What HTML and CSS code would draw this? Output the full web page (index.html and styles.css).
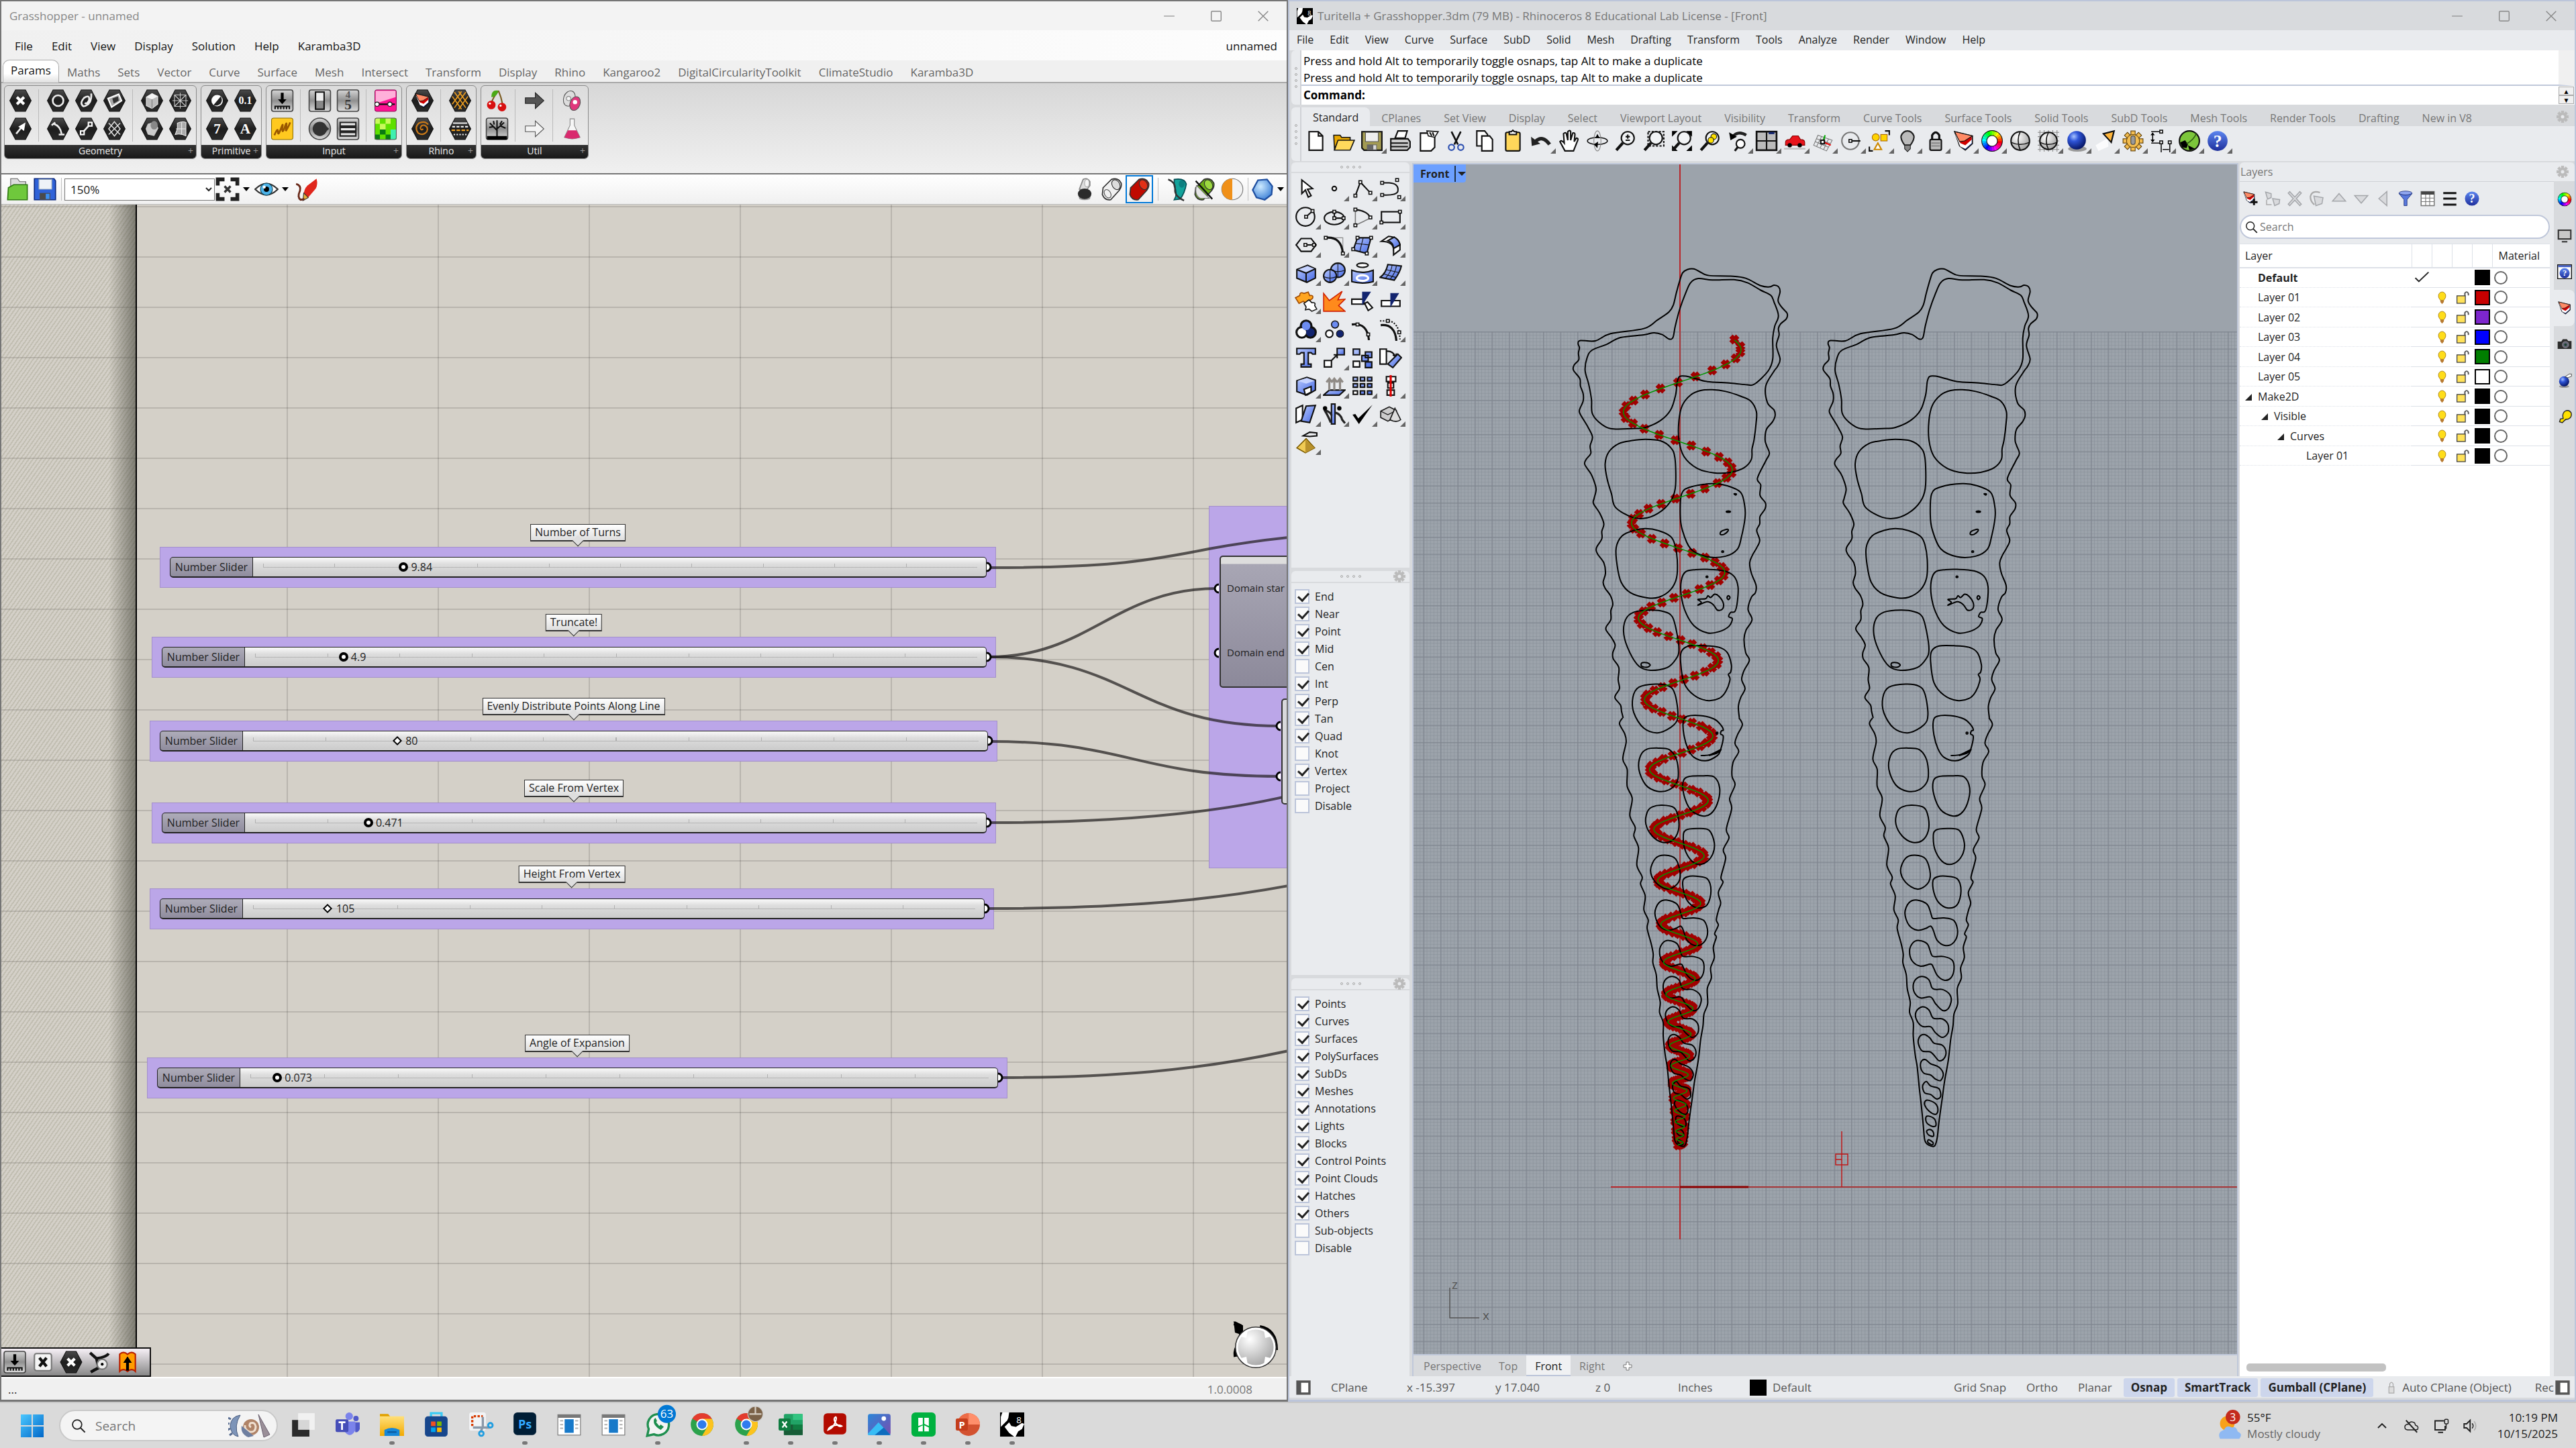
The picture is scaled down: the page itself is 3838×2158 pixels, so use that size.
FILE: index.html
```html
<!DOCTYPE html>
<html lang="en">
<head>
  <meta charset="UTF-8" />
  <meta name="viewport" content="width=device-width, initial-scale=1.0"/>
  <title>Grasshopper + Rhinoceros</title>
  <link rel="stylesheet" href="styles.css">
</head>
<body>
  <!-- Shared gradients for the icons -->
  <svg class="defs" aria-hidden="true">
    <defs>
      <radialGradient id="gBall" cx=".35" cy=".3" r=".75"><stop offset="0" stop-color="#a8c4ff"/><stop offset=".35" stop-color="#2f55d8"/><stop offset="1" stop-color="#04125e"/></radialGradient>
      <radialGradient id="gGrey" cx=".35" cy=".3" r=".8"><stop offset="0" stop-color="#fff"/><stop offset="1" stop-color="#9a9a9a"/></radialGradient>
      <radialGradient id="gSky" cx=".4" cy=".35" r=".7"><stop offset="0" stop-color="#cdeaff"/><stop offset="1" stop-color="#3b7fd6"/></radialGradient>
      <linearGradient id="gDark" x1="0" y1="0" x2="0" y2="1"><stop offset="0" stop-color="#4a4a4a"/><stop offset=".5" stop-color="#1d1d1d"/><stop offset="1" stop-color="#2b2b2b"/></linearGradient>
      <linearGradient id="gMetal" x1="0" y1="0" x2="0" y2="1"><stop offset="0" stop-color="#d5d5d5"/><stop offset=".5" stop-color="#8f8f8f"/><stop offset="1" stop-color="#dcdcdc"/></linearGradient>
      <linearGradient id="gWin" x1="0" y1="0" x2="1" y2="1"><stop offset="0" stop-color="#4cc8ff"/><stop offset="1" stop-color="#0067c8"/></linearGradient>
      <linearGradient id="gBlue" x1="0" y1="0" x2="1" y2="1"><stop offset="0" stop-color="#b9caff"/><stop offset="1" stop-color="#4468e4"/></linearGradient>
      <linearGradient id="gHelp" x1="0" y1="0" x2="0" y2="1"><stop offset="0" stop-color="#5c86f0"/><stop offset="1" stop-color="#1e2f9c"/></linearGradient>
      <linearGradient id="gFold" x1="0" y1="0" x2="0" y2="1"><stop offset="0" stop-color="#ffe07a"/><stop offset="1" stop-color="#f2a900"/></linearGradient>
      <linearGradient id="gPhoto" x1="0" y1="0" x2="1" y2="1"><stop offset="0" stop-color="#2a86d8"/><stop offset="1" stop-color="#7a4cae"/></linearGradient>
    </defs>
  </svg>

  <main class="windows">
    <!-- Grasshopper window -->
    <section class="gh">
      <header class="title-bar">
        <span>Grasshopper - unnamed</span>
        <div class="win-buttons" data-icons="winMin winMax winClose"></div>
      </header>
      <nav class="gh-menu">
        <a href="#">File</a><a href="#">Edit</a><a href="#">View</a><a href="#">Display</a><a href="#">Solution</a><a href="#">Help</a><a href="#">Karamba3D</a>
        <a href="#" class="doc-name">unnamed</a>
      </nav>
      <nav class="gh-tabs">
        <a href="#" class="active">Params</a><a href="#">Maths</a><a href="#">Sets</a><a href="#">Vector</a><a href="#">Curve</a><a href="#">Surface</a><a href="#">Mesh</a><a href="#">Intersect</a><a href="#">Transform</a><a href="#">Display</a><a href="#">Rhino</a><a href="#">Kangaroo2</a><a href="#">DigitalCircularityToolkit</a><a href="#">ClimateStudio</a><a href="#">Karamba3D</a>
      </nav>
      <div class="ribbon">
        <div class="panel">
          <div class="panel-icons">
            <div class="pair" data-icons="hPoint hVector"></div>
            <div class="pair" data-icons="hCircle hArc hCurve hLine hPlane hRect"></div>
            <div class="pair" data-icons="hBox hCyl hMesh hSurf"></div>
          </div>
          <h3>Geometry</h3>
        </div>
        <div class="panel">
          <div class="panel-icons"><div class="pair" data-icons="hBool hInt hNum hText"></div></div>
          <h3>Primitive</h3>
        </div>
        <div class="panel">
          <div class="panel-icons">
            <div class="pair" data-icons="inSlider inScribble"></div>
            <div class="pair" data-icons="inToggle inKnob inScroll inList"></div>
            <div class="pair" data-icons="inPink inGreen"></div>
          </div>
          <h3>Input</h3>
        </div>
        <div class="panel">
          <div class="panel-icons">
            <div class="pair" data-icons="hLayer hSpiral"></div>
            <div class="pair" data-icons="hHatch hLinetype"></div>
          </div>
          <h3>Rhino</h3>
        </div>
        <div class="panel">
          <div class="panel-icons">
            <div class="pair" data-icons="uCherry uTree"></div>
            <div class="pair" data-icons="uArrow uArrowOut"></div>
            <div class="pair" data-icons="uPill uFlask"></div>
          </div>
          <h3>Util</h3>
        </div>
      </div>
      <div class="gh-toolbar">
        <div class="icon-row" data-icons="ghOpen ghSave"></div>
        <i class="sep"></i>
        <select class="zoom-box" aria-label="Zoom"><option>150%</option></select>
        <div class="icon-row carets" data-icons="ghFit ghEye"></div>
        <div class="icon-row" data-icons="ghPen"></div>
        <span class="spring"></span>
        <div class="icon-row" data-icons="pvNone pvWire pvShade"></div>
        <i class="sep wide"></i>
        <div class="icon-row" data-icons="pvTeal pvGreen pvOrange"></div>
        <i class="sep tight"></i>
        <div class="icon-row carets" data-icons="pvBlue"></div>
      </div>
      <div class="gh-canvas" id="canvas">
        <div class="group-box"></div>
        <svg class="wires" id="wires"></svg>
        <div class="component domain"><span>Domain star</span><span>Domain end</span></div>
        <div class="component next"></div>
        <svg class="wires grips"><g>
          <path d="M1814 566a6 6 0 0 0 0 12M1814 662a6 6 0 0 0 0 12M1906 771a6 6 0 0 0 0 12M1906 846a6 6 0 0 0 0 12"/>
        </g></svg>
        <svg class="compass" viewBox="0 0 80 80"><path d="M8 8l10 5v14l6-3-6 12q-10 10-8 22M46 14q24 4 24 34" fill="none" stroke="#000" stroke-width="6"/><path d="M7 5l12 5 2 16-12-4z"/><circle cx="40" cy="44" r="30" fill="url(#gGrey)" stroke="#333" stroke-width="2"/><circle cx="40" cy="44" r="28" fill="none" stroke="#fff" stroke-width="3"/><path d="M18 28l10-10-2 12zM62 28l-10-10 2 12zM18 60l10 10-2-12zM62 60l-10 10 2-12z" fill="#fff"/></svg>
        <div class="widgets" data-icons="inSlider wX hPoint wDraw wBook"></div>
      </div>
      <footer class="gh-status"><span>...</span><span class="version">1.0.0008</span></footer>
    </section>

    <!-- Rhino window -->
    <section class="rhino">
      <header class="title-bar">
        <svg class="logo" viewBox="0 0 32 32" data-icon="rhinoApp"></svg>
        <span>Turitella + Grasshopper.3dm (79 MB) - Rhinoceros 8 Educational Lab License - [Front]</span>
        <div class="win-buttons" data-icons="winMin winMax winClose"></div>
      </header>
      <nav class="rh-menu">
        <a href="#">File</a><a href="#">Edit</a><a href="#">View</a><a href="#">Curve</a><a href="#">Surface</a><a href="#">SubD</a><a href="#">Solid</a><a href="#">Mesh</a><a href="#">Drafting</a><a href="#">Transform</a><a href="#">Tools</a><a href="#">Analyze</a><a href="#">Render</a><a href="#">Window</a><a href="#">Help</a>
      </nav>
      <div class="command">
        <div class="grip"><i></i><i></i><i></i><i></i></div>
        <div class="command-main">
          <div class="history">
            <p>Press and hold Alt to temporarily toggle osnaps, tap Alt to make a duplicate</p>
            <p>Press and hold Alt to temporarily toggle osnaps, tap Alt to make a duplicate</p>
          </div>
          <div class="prompt">
            <label for="cmd">Command:</label><input id="cmd" type="text">
            <div class="spin"><button aria-label="Up">▲</button><button aria-label="Down">▼</button></div>
          </div>
        </div>
      </div>
      <div class="toolbars">
        <div class="grip"><i></i><i></i><i></i><i></i></div>
        <div class="toolbars-main">
          <nav class="rh-tabs">
            <a href="#" class="active">Standard</a><a href="#">CPlanes</a><a href="#">Set View</a><a href="#">Display</a><a href="#">Select</a><a href="#">Viewport Layout</a><a href="#">Visibility</a><a href="#">Transform</a><a href="#">Curve Tools</a><a href="#">Surface Tools</a><a href="#">Solid Tools</a><a href="#">SubD Tools</a><a href="#">Mesh Tools</a><a href="#">Render Tools</a><a href="#">Drafting</a><a href="#">New in V8</a>
            <svg class="cog" viewBox="0 0 32 32" data-icon="cog"></svg>
          </nav>
          <div class="rh-tools" data-icons="new open save* print props cut copy paste undo* pan rotate zoomDyn zoomWin zoomExt zoomSel undoView* views* car* cplane* center* select* bulb* lock* layers* wheel* sphere sphereGrid* ball* spot* gear* dims* hopper* help*"></div>
        </div>
      </div>

      <div class="workspace">
        <aside class="palette">
          <div class="box tools-box">
            <div class="box-head"><i></i><i></i><i></i><i></i></div>
            <div class="tool-grid" data-icons="pArrow pPoint* pPoly* pCurve* pCircle* pEllipse* pArc* pRect* pHex* pFillet* pPatch* pSweep* pBox* pSpheres* pPipe* pSurf* pPuzzle* pExplode pTrim pSplit pUnion* pCircles pEdit pOffset* pText pMove* pCopy pRotate pBoolean* pExtrude* pArray* pAlign* pShear* pPull* pCheck* pSolids* pDrag*"></div>
          </div>
          <div class="box osnap-box">
            <div class="box-head"><i></i><i></i><i></i><i></i><svg class="cog" viewBox="0 0 32 32" data-icon="cog"></svg></div>
            <div class="checks" id="osnaps"></div>
          </div>
          <div class="box filter-box">
            <div class="box-head"><i></i><i></i><i></i><i></i><svg class="cog" viewBox="0 0 32 32" data-icon="cog"></svg></div>
            <div class="checks" id="filters"></div>
          </div>
        </aside>

        <div class="view">
          <div class="viewport">
            <svg class="scene" id="scene"></svg>
            <button class="view-name">Front<i></i></button>
          </div>
          <nav class="view-tabs"><a href="#">Perspective</a><a href="#">Top</a><a href="#" class="active">Front</a><a href="#">Right</a><button class="add" aria-label="Add viewport"><svg viewBox="0 0 32 32" data-icon="addView"></svg></button></nav>
        </div>

        <aside class="layers-panel">
          <div class="layers-head"><h2>Layers</h2><svg class="cog" viewBox="0 0 32 32" data-icon="cog"></svg></div>
          <div class="layers-body">
            <div class="layers-main">
              <div class="layer-tools" data-icons="lNew lSub lDel lDup lUp lDown lLeft lFilter lTable lMenu help"></div>
              <div class="search"><svg viewBox="0 0 32 32" data-icon="mag"></svg><input type="search" aria-label="Search layers" placeholder="Search"></div>
              <div class="layer-list">
                <table>
                  <thead><tr><th class="name">Layer</th><th></th><th></th><th></th><th></th><th class="mat">Material</th></tr></thead>
                  <tbody id="layers"></tbody>
                </table>
                <div class="hscroll"></div>
              </div>
            </div>
            <div class="side-tabs" data-icons="wheel monitor helpBox layers camera ballHand bulbY"></div>
          </div>
        </aside>
      </div>

      <footer class="rh-status">
        <svg class="pane" viewBox="0 0 32 32" data-icon="pane"></svg>
        <span class="s-cplane">CPlane</span><span class="s-x">x -15.397</span><span class="s-y">y 17.040</span><span class="s-z">z 0</span><span class="s-unit">Inches</span>
        <span class="s-layer"><i></i>Default</span>
        <span class="spring"></span>
        <button>Grid Snap</button><button>Ortho</button><button>Planar</button><button class="on">Osnap</button><button class="on">SmartTrack</button><button class="on">Gumball (CPlane)</button>
        <button class="auto"><svg viewBox="0 0 32 32" data-icon="lockGrey"></svg>Auto CPlane (Object)</button><button class="rec">Rec</button>
        <svg class="pane" viewBox="0 0 32 32" data-icon="pane"></svg>
      </footer>
    </section>
  </main>

  <!-- Windows taskbar -->
  <footer class="taskbar">
    <button class="start" aria-label="Start"><svg viewBox="0 0 32 32" data-icon="win"></svg></button>
    <label class="task-search"><svg viewBox="0 0 32 32" data-icon="mag"></svg><input type="text" placeholder="Search"><svg class="shells" viewBox="0 0 64 36" data-icon="shells"></svg></label>
    <div class="apps" data-icons="tTask tTeams tFiles. tStore tSnip tPs. tDoc tDoc tWhats. tChrome tChrome2. tExcel. tAcro. tPhoto. tGreen. tPpt. rhinoApp."></div>
    <span class="spring"></span>
    <button class="weather"><svg viewBox="0 0 32 40" data-icon="weather"></svg><span>55°F<small>Mostly cloudy</small></span></button>
    <div class="tray" data-icons="trayUp trayCloud trayNet traySound"></div>
    <div class="clock"><span>10:19 PM</span><span>10/15/2025</span></div>
  </footer>

  <script src="script.js"></script>
</body>
</html>
```

FILE: styles.css
```css
* {
  box-sizing: border-box;
}
body {
  margin: 0;
  height: 100vh;
  display: flex;
  flex-direction: column;
  overflow: hidden;
  font-family: "Segoe UI", "Open Sans", "Noto Sans", sans-serif;
  font-size: 16px;
  line-height: 24px;
  color: #222;
  background: #dadada;
}
a {
  color: inherit;
  text-decoration: none;
  white-space: nowrap;
}
button, input, select {
  font: inherit;
  color: inherit;
  background: none;
  border: 0;
  padding: 0;
  margin: 0;
}
h2, h3, p {
  margin: 0;
  font-weight: normal;
}
svg {
  display: block;
}
.defs {
  position: absolute;
  width: 0;
  height: 0;
}
.spring {
  flex: 1;
}
.windows {
  flex: 1;
  display: flex;
  min-height: 0;
}
.gh, .rhino {
  flex: 1;
  min-width: 0;
  display: flex;
  flex-direction: column;
}

/* Icon drawing helpers */
.ln { fill: none; stroke: #111; stroke-width: 2; }
.wh { fill: #fff; stroke: #111; stroke-width: 2; }
.bl { fill: url(#gBlue); stroke: #111; stroke-width: 2; }
.nv { fill: #12246f; stroke: #12246f; }
.gy { fill: #d9dadd; stroke: #a4a6aa; stroke-width: 2; }
.hx { fill: url(#gDark); stroke: #111; }
.hw { fill: none; stroke: #eee; stroke-width: 2.5; }
.mt { fill: url(#gMetal); stroke: #444; stroke-width: 1.5; }

/* Title bars */
.title-bar {
  display: flex;
  align-items: center;
  height: 43px;
  padding-left: 12px;
  font-size: 17px;
  color: #888;
  background: #f3f3f3;
}
.win-buttons {
  display: flex;
  margin-left: auto;
}
.win-buttons button {
  width: 70px;
  display: flex;
  justify-content: center;
}
.win-buttons svg {
  width: 18px;
  height: 18px;
}

/* Grasshopper */
.gh {
  border: 2px solid #757575;
  border-bottom-width: 3px;
  background: #f0f0f0;
  font-size: 17px;
}
.gh-menu {
  display: flex;
  align-items: center;
  gap: 28px;
  height: 45px;
  padding: 2px 14px 0 20px;
  color: #111;
  background: linear-gradient(to right, #f0f0f0, #fdfdfd);
}
.doc-name {
  margin-left: auto;
}
.gh-tabs {
  display: flex;
  align-items: center;
  height: 34px;
  padding-left: 2px;
  color: #666;
  border-bottom: 2px solid #aaa;
}
.gh-tabs a {
  padding: 4px 14px 0 12px;
}
.gh-tabs .active {
  height: 34px;
  padding: 3px 11px 0 11px;
  color: #111;
  background: linear-gradient(#fff 60%, #e0e0e0);
  border: 1px solid #aaa;
  border-bottom: 0;
  border-radius: 10px 10px 0 0;
}
.ribbon {
  display: flex;
  gap: 6px;
  height: 134px;
  padding: 3px 4px 0;
  align-items: flex-start;
  background: linear-gradient(#d7d7d7, #f0f0f0);
}
.panel {
  border: 1px solid #8a8a8a;
  border-radius: 6px;
  overflow: hidden;
  background: linear-gradient(#dcdcdc, #efefef);
}
.panel-icons {
  display: flex;
  gap: 21px;
  height: 88px;
  padding: 5px 6px 0;
}
.pair {
  display: grid;
  grid-template-rows: 34px 34px;
  grid-auto-flow: column;
  grid-auto-columns: 35px;
  gap: 8px 7px;
  position: relative;
}
.pair + .pair::before {
  content: "";
  position: absolute;
  left: -12px;
  top: 0;
  height: 78px;
  border-left: 1px solid #bbb;
}
.pair button, .pair svg {
  width: 35px;
  height: 34px;
}
.panel h3 {
  height: 20px;
  font-size: 14px;
  line-height: 18px;
  text-align: center;
  color: #eee;
  background: linear-gradient(#333, #181818);
  position: relative;
}
.panel h3::after {
  content: "+";
  position: absolute;
  right: 4px;
  color: #999;
}
.gh-toolbar {
  display: flex;
  align-items: center;
  height: 46px;
  padding: 0 2px 0 3px;
  border-top: 2px solid #777;
  background: linear-gradient(#fff, #f0f0f0);
}
.icon-row {
  display: flex;
}
.icon-row button {
  width: 41px;
  height: 42px;
  display: flex;
  align-items: center;
  justify-content: center;
  position: relative;
}
.icon-row svg {
  width: 36px;
  height: 36px;
}
.icon-row .pvShade {
  border: 2px solid #0078d7;
}
.carets button {
  width: 58px;
  padding-right: 20px;
}
.carets .pvBlue {
  width: 52px;
  padding-right: 16px;
}
.carets.icon-row button::after {
  content: "";
  position: absolute;
  right: 6px;
  border: 5px solid transparent;
  border-top: 6px solid #000;
  border-bottom: 0;
}
.carets.icon-row .pvBlue::after {
  right: 2px;
}
.sep {
  width: 1px;
  height: 34px;
  margin: 0 4px 0 4px;
  background: #c0c0c0;
}
.sep.wide {
  margin: 0 7px;
}
.sep.tight {
  margin: 0 3px;
}
.zoom-box {
  width: 224px;
  height: 33px;
  padding-left: 4px;
  border: 1px solid #777;
  background: #fff;
}

/* Grasshopper canvas */
.gh-canvas {
  flex: 1;
  position: relative;
  overflow: hidden;
  min-height: 0;
  border-top: 1px solid #bbb;
  background:
    linear-gradient(#000, #000) 200px 0 / 2px 100% no-repeat,
    linear-gradient(to right, transparent, rgba(70, 70, 60, .6)) 160px 0 / 40px 100% no-repeat,
    repeating-linear-gradient(125deg, rgba(120, 120, 90, .2) 0 2px, transparent 2px 5px) 0 0 / 200px 100% no-repeat,
    repeating-linear-gradient(to right, rgba(0, 0, 0, .13) 0 2px, transparent 2px 225px) 200px 0 no-repeat,
    repeating-linear-gradient(rgba(0, 0, 0, .13) 0 2px, transparent 2px 75px) 0 2px,
    #d4d0c8;
}
.node, .group-box {
  position: absolute;
  background: #bba6e8;
  border: 1px solid #a38fcb;
}
.node {
  display: flex;
  height: 61px;
  padding: 14px 13px 14px 14px;
  line-height: 28px;
  font-size: 16px;
}
.node-name {
  flex: 0 0 124px;
  border: 1px solid #222;
  border-bottom-width: 2px;
  border-radius: 5px 0 0 5px;
  text-align: center;
  background: linear-gradient(#aeacb9, #8f8c9d);
}
.track {
  flex: 1;
  padding: 0 13px 0 15px;
  border: 1px solid #222;
  border-bottom-width: 2px;
  border-left: 0;
  border-radius: 0 5px 5px 0;
  background: linear-gradient(#fafafa, #ddd 35%, #cbcbcb);
}
.rail {
  position: relative;
  height: 28px;
  background:
    linear-gradient(#b5b5b5, #b5b5b5) 0 14px / 100% 1px no-repeat,
    repeating-linear-gradient(to right, #b0b0b0 0 1px, transparent 1px 10%) 0 9px / 100% 6px no-repeat;
}
.rail input {
  appearance: none;
  position: absolute;
  left: -7px;
  top: 0;
  width: calc(100% + 14px);
  height: 28px;
}
.rail input::-webkit-slider-thumb {
  appearance: none;
  width: 14px;
  height: 14px;
  border: 4px solid #000;
  border-radius: 50%;
  background: #fff;
}
.rail input.whole::-webkit-slider-thumb {
  width: 10px;
  height: 10px;
  border-width: 2px;
  border-radius: 0;
  transform: rotate(45deg);
}
.rail output {
  position: absolute;
  margin-left: 11px;
}
.tag {
  position: absolute;
  left: 50%;
  bottom: calc(100% + 9px);
  transform: translateX(-50%);
  height: 26px;
  padding: 0 6px;
  line-height: 22px;
  white-space: nowrap;
  border: 2px solid #333;
  border-width: 1px 1px 2px;
  background: linear-gradient(#fff, #dedede);
}
.tag::after {
  content: "";
  position: absolute;
  left: 50%;
  top: 18px;
  width: 11px;
  height: 11px;
  margin-left: -6px;
  border: solid #333;
  border-width: 0 1px 1px 0;
  background: #dedede;
  transform: rotate(45deg);
}
.group-box {
  left: 1799px;
  top: 449px;
  right: -2px;
  height: 540px;
}
.wires {
  position: absolute;
  inset: 0;
  width: 100%;
  height: 100%;
  pointer-events: none;
}
.wires path {
  fill: none;
  stroke: #1e1b1b;
  stroke-opacity: .7;
  stroke-width: 4;
}
.wires .grip-out, .grips path {
  fill: #fff;
  stroke: #000;
  stroke-opacity: 1;
  stroke-width: 3;
}
.component {
  position: absolute;
  right: -20px;
  border: 2px solid #333;
  border-radius: 5px;
  font-size: 15px;
  background: linear-gradient(#ddd 0 10px, #a8a6b4 11px, #8c899a);
}
.component.domain {
  left: 1815px;
  top: 523px;
  height: 197px;
  padding: 34px 0 0 9px;
}
.component.domain span {
  display: block;
  height: 96px;
  white-space: nowrap;
}
.component.next {
  left: 1907px;
  top: 736px;
  height: 158px;
  background: #d8d8dc;
}
.compass {
  position: absolute;
  right: 6px;
  bottom: 8px;
  width: 80px;
  height: 80px;
}
.widgets {
  position: absolute;
  left: 0;
  bottom: 0;
  display: flex;
  gap: 8px;
  padding: 3px 16px 3px 3px;
  border: 2px solid #111;
  border-left: 0;
  background: linear-gradient(#f6f0f6, #888);
}
.widgets svg {
  width: 34px;
  height: 34px;
}
.gh-status {
  display: flex;
  justify-content: space-between;
  align-items: center;
  height: 34px;
  padding: 2px 51px 0 10px;
  border-top: 2px solid #fff;
}
.version {
  color: #777;
}

/* Rhino */
.rhino {
  border: 2px solid #bcc5da;
  border-bottom-width: 3px;
  background: #d8dadd;
  padding-bottom: 3px;
}
.rhino .title-bar {
  padding-left: 11px;
  color: #777;
  background: #d8dadd;
}
.logo {
  width: 24px;
  height: 24px;
  margin-right: 7px;
}
.rh-menu {
  display: flex;
  align-items: center;
  gap: 24px;
  height: 30px;
  padding: 0 0 2px 11px;
  background: #e9ebee;
}
.command, .toolbars {
  display: flex;
  padding-left: 3px;
}
.grip {
  flex: 0 0 15px;
  display: flex;
  flex-direction: column;
  align-items: center;
  justify-content: center;
  gap: 5px;
  background: #e9ebee;
  border-right: 2px solid #d0d2d6;
  border-radius: 6px 0 0 6px;
}
.grip i, .box-head i {
  width: 4px;
  height: 4px;
  border: 1px solid #aaa;
  border-radius: 50%;
}
.command-main {
  flex: 1;
  min-width: 0;
  background: #fff;
  color: #000;
  font-size: 17px;
}
.history {
  height: 53px;
  padding: 3px 0 0 3px;
  border-right: 24px solid #f0f0f0;
  border-bottom: 2px solid #c0c8da;
}
.history p {
  line-height: 25px;
}
.prompt {
  display: flex;
  align-items: center;
  height: 28px;
  padding-left: 3px;
  font-weight: bold;
}
.prompt input {
  flex: 1;
}
.spin {
  width: 24px;
}
.spin button {
  display: block;
  width: 23px;
  height: 13px;
  font-size: 10px;
  line-height: 10px;
  border: 1px solid #aaa;
  background: #f0f0f0;
}
.toolbars {
  padding-top: 4px;
}
.toolbars-main {
  flex: 1;
  min-width: 0;
}
.rh-tabs {
  display: flex;
  align-items: center;
  height: 28px;
  color: #777;
}
.rh-tabs a {
  padding: 3px 17px 0;
}
.rh-tabs .active {
  height: 28px;
  color: #222;
  background: #e9ebee;
  border-radius: 0 8px 0 0;
}
.cog {
  width: 20px;
  height: 20px;
  margin-left: auto;
}
.rh-tabs .cog {
  margin-right: 8px;
}
.rh-tools {
  display: flex;
  height: 52px;
  padding: 0 0 0 1px;
  background: #e9ebee;
}
.rh-tools button, .tool-grid button {
  width: 42px;
  height: 42px;
  padding: 1px 0 0 3px;
  position: relative;
}
.rh-tools svg, .tool-grid svg {
  width: 34px;
  height: 34px;
}
.flyout::after {
  content: "";
  position: absolute;
  right: 0;
  bottom: 1px;
  border: 4px solid transparent;
  border-right-color: #666;
  border-bottom-color: #666;
}

.workspace {
  flex: 1;
  min-height: 0;
  display: flex;
  margin-top: 2px;
}
.palette {
  flex: 0 0 183px;
  display: flex;
  flex-direction: column;
  gap: 5px;
  padding: 0 4px 0 3px;
}
.box {
  background: #e9ebee;
  border-radius: 6px 6px 0 0;
}
.tools-box {
  flex: 0 0 604px;
}
.osnap-box {
  flex: 0 0 602px;
}
.filter-box {
  flex: 1;
}
.box-head {
  display: flex;
  align-items: center;
  gap: 5px;
  height: 16px;
  padding-left: 73px;
  border-bottom: 2px solid #d8dadd;
}
.osnap-box .box-head, .filter-box .box-head {
  height: 18px;
}
.box-head .cog {
  margin-right: 5px;
}
.tool-grid {
  display: grid;
  grid-template-columns: repeat(4, 42px);
  padding: 1px 0 0 2px;
}
.checks {
  padding: 7px 0 0 5px;
}
.checks label {
  display: flex;
  align-items: center;
  gap: 8px;
  height: 26px;
}
.checks input {
  appearance: none;
  width: 22px;
  height: 22px;
  border: 2px solid #bcc5da;
  background: #fafafa;
}
.checks input:checked::before {
  content: "";
  display: block;
  width: 13px;
  height: 7px;
  margin: 3px 0 0 3px;
  border: solid #222;
  border-width: 0 0 3px 3px;
  transform: rotate(-48deg);
}

.view {
  flex: 1;
  min-width: 0;
  display: flex;
  flex-direction: column;
  margin-top: 1px;
  border: solid #c0c8da;
  border-width: 2px 2px 0;
}
.viewport {
  flex: 1;
  min-height: 0;
  position: relative;
  overflow: hidden;
  background: #9ca3ab;
}
.scene {
  position: absolute;
  width: 100%;
  height: 100%;
}
.shell {
  fill: none;
  stroke: #000;
  stroke-width: 2;
  vector-effect: non-scaling-stroke;
}
.view-name {
  position: absolute;
  left: 0;
  top: 0;
  display: flex;
  align-items: center;
  height: 27px;
  padding-left: 10px;
  font-weight: bold;
  background: #6ca0ff;
  border-radius: 0 0 4px 0;
}
.view-name i {
  height: 24px;
  margin-left: 8px;
  border-left: 2px solid #234;
  width: 17px;
}
.view-name i::after {
  content: "";
  display: block;
  margin: 9px 0 0 3px;
  width: 0;
  border: 6px solid transparent;
  border-top-color: #222;
}
.view-tabs {
  display: flex;
  height: 33px;
  padding-left: 2px;
  border-top: 2px solid #c0c8da;
  color: #777;
  background: #d8dadd;
}
.view-tabs a {
  padding: 4px 13px 0;
}
.view-tabs .active {
  color: #222;
  background: #f0f1f3;
  border-bottom: 2px solid #bcc5da;
}
.view-tabs .add {
  padding: 0 14px 0 13px;
}
.add svg {
  width: 16px;
  height: 16px;
}

/* Layers panel */
.layers-panel {
  flex: 0 0 501px;
  display: flex;
  flex-direction: column;
  padding-left: 2px;
}
.layers-head {
  display: flex;
  align-items: center;
  height: 28px;
  padding: 0 8px 0 1px;
  background: #e9ebee;
  border-radius: 6px 6px 0 0;
  color: #777;
}
.layers-head h2 {
  font-size: 16px;
}
.layers-body {
  flex: 1;
  min-height: 0;
  display: flex;
}
.layers-main {
  flex: 1;
  display: flex;
  flex-direction: column;
  padding-right: 6px;
  background: #e9ebee;
  border-top: 1px solid #d0d2d6;
}
.layer-tools {
  display: flex;
  padding: 11px 0 0 1px;
}
.layer-tools button {
  width: 33px;
  height: 28px;
  padding-left: 3px;
}
.layer-tools svg {
  width: 24px;
  height: 24px;
}
.search {
  display: flex;
  align-items: center;
  height: 36px;
  margin: 10px 0 7px;
  padding-left: 6px;
  border: 2px solid #c0c8da;
  border-radius: 18px;
  background: #fff;
}
.search svg {
  width: 19px;
  height: 19px;
}
.search input {
  flex: 1;
  padding-left: 3px;
}
input::placeholder {
  color: #777;
}
.layer-list {
  flex: 1;
  display: flex;
  flex-direction: column;
  justify-content: space-between;
  background: #fff;
}
table {
  width: 100%;
  border-collapse: collapse;
  table-layout: fixed;
}
th {
  width: 30px;
  height: 35px;
  padding: 0;
  text-align: left;
  font-weight: normal;
  border: solid #dde1e8;
  border-width: 1px 0 2px 1px;
}
th.name {
  width: 256px;
  padding-left: 8px;
  border-left: 0;
}
th.mat {
  width: auto;
  padding-left: 9px;
}
td {
  height: 29px;
  padding: 0;
  line-height: 22px;
  border-bottom: 1px solid #dde1e8;
}
tr:nth-child(odd) td {
  height: 30px;
}
td:first-child {
  padding-left: 27px;
  border-bottom-style: dotted;
}
td.d0:first-child { padding-left: 8px; }
td.d1:first-child { padding-left: 32px; }
td.d2:first-child { padding-left: 56px; }
td.d3:first-child { padding-left: 99px; }
.fold {
  display: inline-block;
  margin-right: 9px;
  border: 5px solid transparent;
  border-right-color: #222;
  border-bottom-color: #222;
}
td svg {
  width: 21px;
  height: 21px;
  margin-left: 5px;
}
.swatch {
  width: 23px;
  height: 23px;
  margin-left: 4px;
  border: 2px solid #000;
}
.ring {
  width: 20px;
  height: 20px;
  margin-left: 3px;
  border: 2px solid #666;
  border-radius: 50%;
}
.current td {
  font-weight: bold;
}
.hscroll {
  width: 208px;
  height: 12px;
  margin: 0 0 7px 10px;
  border-radius: 5px;
  background: #c2c2c2;
}
.side-tabs {
  flex: 0 0 31px;
}
.side-tabs button {
  display: flex;
  align-items: center;
  justify-content: center;
  width: 31px;
  height: 54px;
}
.side-tabs svg {
  width: 22px;
  height: 22px;
}
.side-tabs .layers {
  background: #e9ebee;
  border-radius: 0 8px 8px 0;
}

.rh-status {
  display: flex;
  align-items: center;
  height: 32px;
  padding: 2px 7px 0 10px;
  font-size: 17px;
  white-space: nowrap;
  color: #555;
  background: #e9ebee;
}
.pane {
  width: 22px;
  height: 22px;
}
.s-cplane { width: 143px; padding-left: 30px; }
.s-x { width: 132px; }
.s-y { width: 149px; }
.s-z { width: 123px; }
.s-unit { width: 107px; }
.s-layer { display: flex; align-items: center; }
.s-layer i {
  width: 25px;
  height: 24px;
  margin-right: 9px;
  background: #000;
}
.rh-status button {
  height: 28px;
  padding: 0 13px;
  margin: 0 2px;
}
.rh-status .on {
  padding: 0 11px;
  font-weight: bold;
  color: #222;
  background: #cdd6ec;
  border-radius: 3px;
}
.rh-status .auto {
  display: flex;
  align-items: center;
}
.auto svg {
  width: 20px;
  height: 22px;
  margin-right: 6px;
}
.rh-status .rec {
  padding: 0;
  margin: 0 2px 0 20px;
}

/* Taskbar */
.taskbar {
  flex: 0 0 69px;
  display: flex;
  align-items: center;
  padding-left: 31px;
  border-top: 2px solid #c6c6c6;
  font-size: 17px;
  background: #dadada;
}
.start svg {
  width: 34px;
  height: 34px;
}
.task-search {
  display: flex;
  align-items: center;
  width: 326px;
  height: 47px;
  margin: 0 10px 0 23px;
  padding: 0 8px 0 16px;
  border: 2px solid #c9c9c9;
  border-radius: 24px;
  background: #f4f4f4;
  font-size: 19px;
}
.task-search svg {
  width: 22px;
  height: 22px;
}
.task-search input {
  flex: 1;
  min-width: 0;
  padding-left: 14px;
}
.task-search .shells {
  width: 64px;
  height: 36px;
}
.apps {
  display: flex;
}
.apps button {
  width: 66px;
  height: 67px;
  padding: 0 0 4px 10px;
  position: relative;
}
.apps svg {
  width: 36px;
  height: 36px;
  overflow: visible;
}
.running::after {
  content: "";
  position: absolute;
  left: 24px;
  bottom: 5px;
  width: 8px;
  height: 5px;
  border-radius: 3px;
  background: #777;
}
.weather {
  display: flex;
  align-items: center;
  gap: 6px;
  text-align: left;
}
.weather > svg {
  width: 40px;
  height: 48px;
}
.weather small {
  display: block;
  font-size: 17px;
  color: #666;
}
.tray {
  display: flex;
  gap: 20px;
  margin-left: 80px;
}
.tray svg {
  width: 24px;
  height: 24px;
}
.clock {
  display: flex;
  flex-direction: column;
  align-items: flex-end;
  width: 118px;
  margin-right: 27px;
}
```

FILE: script.js
```js
// Icon drawings, all on a 32 x 32 box
const hex = inner => '<path class="hx" d="M9 1h14l8 15-8 15H9L1 16z"/>' + inner;
const tile = inner => '<rect class="mt" x="1" y="1" width="30" height="30" rx="3"/>' + inner;
const dot = (...pts) => pts.map(([x, y]) => `<rect x="${x - 2}" y="${y - 2}" width="4" height="4" fill="#fff" stroke="#111" stroke-width="1.5"/>`).join('');
const txt = (t, size, fill, x = 16, y = 24) => `<text x="${x}" y="${y}" text-anchor="middle" font-family="Liberation Serif, serif" font-weight="bold" font-size="${size}" fill="${fill}">${t}</text>`;

function wheelArcs(cx, cy, r, w) {
  let out = `<circle cx="${cx}" cy="${cy}" r="${r}" fill="#fff" stroke="#111" stroke-width="${w + 2}"/>`;
  for (let i = 0; i < 24; i++) {
    const a = i * 15 * Math.PI / 180, b = (i * 15 + 16) * Math.PI / 180;
    out += `<path fill="none" stroke="hsl(${(360 - i * 15) % 360} 100% 50%)" stroke-width="${w}" d="M${cx + r * Math.cos(a)} ${cy + r * Math.sin(a)}A${r} ${r} 0 0 1 ${cx + r * Math.cos(b)} ${cy + r * Math.sin(b)}"/>`;
  }
  return out;
}

const cogPath = (fill, stroke) => {
  let teeth = '';
  for (let i = 0; i < 8; i++) teeth += `<rect x="13" y="2" width="6" height="8" transform="rotate(${i * 45} 16 16)" fill="${fill}" stroke="${stroke}"/>`;
  return teeth + `<circle cx="16" cy="16" r="9" fill="${fill}" stroke="${stroke}"/>`;
};
const layerWedge = '<path d="M3 3l7 20 8 6 10-9V9z" fill="#1c3aa0" stroke="#111" stroke-width="1.5"/><path d="M4 7l7 17 7 3 9-8V9z" fill="#fff"/><path d="M4 4l7 15 7 3 9-8V9z" fill="#d00000"/><path d="M3 3l25 6-11 7-7 1z" fill="#ff8a65" stroke="#111"/>';
const roll = (a, b) => `<path d="M4 14L15 3q9-3 13 5 1 5-3 10L14 30q-8 1-11-7z" fill="${a}" stroke="#333" stroke-width="1.5"/><ellipse cx="21" cy="10" rx="5" ry="7" transform="rotate(-30 21 10)" fill="${b}" stroke="#333"/>`;
const chrome = '<circle cx="16" cy="16" r="15" fill="#2ba24c"/><path d="M3 8.500A15 15 0 0 1 29 8.500L16 16z" fill="#e33b2e"/><path d="M3 8.500l8 13 5-6z" fill="#2ba24c"/><path d="M29 8.500A15 15 0 0 1 16 31l7-12-7-10.500z" fill="#fcc31e"/><circle cx="16" cy="16" r="7.500" fill="#fff"/><circle cx="16" cy="16" r="5.800" fill="#2f7bee"/>';
const magnify = inner => inner + '<circle cx="19" cy="12" r="9" fill="#f4f6f8" fill-opacity=".7" stroke="#111" stroke-width="2"/><path d="M12 19L3 29" stroke="#111" stroke-width="4"/>';
const docIcon = '<rect x="1" y="3" width="30" height="27" fill="#fff" stroke="#777"/><path d="M1 5h30" stroke="#777" stroke-width="4"/><rect x="10" y="9" width="12" height="18" fill="#1779c9"/><path d="M4 11h4M4 16h4M4 21h4M24 11h4M24 16h4M24 21h4" stroke="#bbb" stroke-width="2"/>';

const icons = {
  winMin: '<path d="M2 16h28" stroke="#888" stroke-width="2"/>',
  winMax: '<rect x="3" y="3" width="26" height="26" rx="3" fill="none" stroke="#888" stroke-width="2.500"/>',
  winClose: '<path d="M3 3l26 26M29 3L3 29" stroke="#888" stroke-width="2.500"/>',
  cog: cogPath('#bbb', '#bbb') + '<circle cx="16" cy="16" r="4" fill="#e9ebee"/>',
  mag: '<circle cx="13" cy="13" r="10" fill="none" stroke="#222" stroke-width="2.500"/><path d="M20 20l10 10" stroke="#222" stroke-width="3"/>',
  addView: '<path d="M12 4h8v8h8v8h-8v8h-8v-8H4v-8h8z" fill="#fff" stroke="#777" stroke-width="2"/>',

  // Grasshopper ribbon
  hPoint: hex('<path d="M11 11l10 10M21 11L11 21" stroke="#fff" stroke-width="4"/>'),
  hVector: hex('<path class="hw" d="M10 23l9-11"/><path d="M23 7l-2 12-8-6z" fill="#fff"/>'),
  hCircle: hex('<circle class="hw" cx="16" cy="16" r="7.500"/>'),
  hArc: hex('<path class="hw" d="M10 9q9 3 11 14"/><path class="hw" d="M7 11l5-4M17 24h8"/>'),
  hCurve: hex('<path class="hw" d="M23 6Q24 22 12 24 6 20 13 12q8-5 7 3-3 7-6 4"/>'),
  hLine: hex('<path class="hw" d="M11 21L21 10"/><rect x="8" y="19" width="5" height="5" fill="#222" stroke="#fff" stroke-width="2"/><rect x="19" y="7" width="5" height="5" fill="#222" stroke="#fff" stroke-width="2"/>'),
  hPlane: hex('<path d="M7 13l15-6 4 9-14 9z" fill="#aaa" stroke="#fff" stroke-width="2"/><path d="M13 13l8-3 1 6-7 4z" fill="#333"/>'),
  hRect: hex('<path fill="none" stroke="#ddd" stroke-width="1.500" d="M16 6l8 10-8 10-8-10zM8 8l16 16M24 8L8 24"/>'),
  hBox: hex('<path d="M8 11l8-5 8 4v11l-8 6-8-4z" fill="#bbb" stroke="#eee"/><path d="M8 11l8 3 8-4-8-4z" fill="#f4f4f4"/><path d="M16 14v13" stroke="#777"/>'),
  hCyl: hex('<path d="M10 9l10-3 5 9-6 11-9-2-3-8z" fill="#ccc"/><ellipse cx="19" cy="11" rx="5" ry="6" fill="#888"/>'),
  hMesh: hex('<path d="M8 8h16v16H8zM16 8v16M8 16h16M8 8l16 16M24 8L8 24M16 5v22M5 16h22" fill="none" stroke="#ccc"/>'),
  hSurf: hex('<path d="M12 8q7-3 12-1v19q-7-4-15-2l3-8zM18 7v17M10 16h14" fill="#aaa" stroke="#eee"/>'),
  hBool: hex('<circle cx="16" cy="16" r="8" fill="#fff"/><path d="M21 10A8 8 0 0 1 11 22z" fill="#222"/>'),
  hInt: hex(txt('7', 20, '#fff', 16, 23)),
  hNum: hex(txt('0.1', 15, '#fff', 16, 21)),
  hText: hex(txt('A', 20, '#fff', 16, 23)),
  inSlider: tile('<path d="M14 5h4v9h4l-6 7-6-7h4z"/><path d="M5 24h22M6 23v5m4-5v5m4-5v5m4-5v5m4-5v5m4-5v5" stroke="#111" stroke-width="2"/>'),
  inScribble: '<rect x="1" y="1" width="30" height="30" rx="3" fill="#ffc91f" stroke="#8a6d00"/><path d="M5 25q5-12 5-5t4-4 2-1q0 9 3 0t3-6-1 10q5-8 6-12" fill="none" stroke="#9a5800" stroke-width="2.500"/>',
  inToggle: tile('<rect x="10" y="4" width="12" height="24" fill="#888" stroke="#111" stroke-width="2"/><rect x="11" y="5" width="10" height="11" fill="#eee"/>'),
  inKnob: '<circle class="mt" cx="16" cy="16" r="15"/><circle cx="16" cy="16" r="10" fill="#333"/><path d="M20 8l9 8-9 8z" fill="#333"/>',
  inScroll: tile(txt('4', 14, '#555', 16, 12) + txt('5', 20, '#333', 16, 28)),
  inList: tile('<path d="M5 7h22v5H5zM5 14h22v5H5zM5 21h22v5H5z" fill="#e8e8e8" stroke="#222" stroke-width="2"/>'),
  inPink: '<rect x="1" y="1" width="30" height="30" rx="3" fill="#ff1493" stroke="#8a0c55"/><path d="M2 2h28v9L2 20z" fill="#ffb0da"/><path d="M3 21h26" stroke="#111" stroke-width="2"/><circle cx="4" cy="21" r="3" fill="#fff" stroke="#111"/><circle cx="22" cy="21" r="3" fill="#fff" stroke="#111"/>',
  inGreen: '<rect x="1" y="1" width="30" height="30" fill="#5ee000"/><path d="M1 1h7v8H1zM16 1h7v8h-7zM8 9h8v8H8z" fill="#c9f95c"/><path d="M8 17h8v7H8zM1 24h7v7H1zM16 24h7v7h-7z" fill="#0a7a12"/><path d="M23 17h8v14h-8z" fill="#3ff0b0"/><rect x="1" y="1" width="30" height="30" rx="3" fill="none" stroke="#555"/>',
  hLayer: hex('<g transform="translate(4 4) scale(.75)">' + layerWedge + '</g>'),
  hSpiral: hex('<path d="M17 16q-3 3-4-1 1-5 6-4 6 3 3 9-5 6-12 2-6-8 1-14 8-4 13 2" fill="none" stroke="#c87818" stroke-width="2"/>'),
  hHatch: hex('<path d="M8 4l16 22M14 3l13 18M5 10l13 18M24 4L8 26M18 3L5 21M27 10L14 28" stroke="#f0a020" stroke-width="1.500"/>'),
  hLinetype: hex('<path d="M6 8h20" stroke="#eee" stroke-width="2"/><path d="M5 13h22" stroke="#eee" stroke-width="2" stroke-dasharray="4 2"/><path d="M4 18h24" stroke="#f0a020" stroke-width="2" stroke-dasharray="5 2"/><path d="M7 24h18" stroke="#eee" stroke-width="2" stroke-dasharray="2 2"/>'),
  uCherry: '<path d="M18 2Q10 12 8 20M18 2q4 9 6 20" fill="none" stroke="#7a5a20" stroke-width="2"/><path d="M18 2Q8 0 8 11q8 0 10-9z" fill="#4ba916"/><circle cx="8" cy="22" r="6" fill="#d81010"/><circle cx="23" cy="25" r="6" fill="#d81010"/><circle cx="6" cy="20" r="1.500" fill="#fff"/><circle cx="21" cy="23" r="1.500" fill="#fff"/>',
  uTree: tile('<path d="M16 28V14M16 18L6 8M16 16L26 7M16 14V4M11 13L5 14M21 12l7 3M12 10l-1-5M20 10l3-5" stroke="#111" stroke-width="2"/><path d="M2 26h28v5H2z"/>'),
  uArrow: '<path d="M3 12h14V5l12 11-12 11v-7H3z" fill="#555" stroke="#222"/>',
  uArrowOut: '<path d="M3 12h14V5l12 11-12 11v-7H3z" fill="#f4f4f4" stroke="#555"/>',
  uPill: '<ellipse cx="12" cy="13" rx="8" ry="11" transform="rotate(20 12 13)" fill="#ddd" stroke="#555"/><circle cx="11" cy="13" r="3" fill="#f6f6f6" stroke="#888"/><ellipse cx="20" cy="20" rx="7" ry="10" transform="rotate(20 20 20)" fill="#e0387c" stroke="#555"/><circle cx="20" cy="18" r="3" fill="#fff"/>',
  uFlask: '<path d="M13 2h6v9l8 17q-11 4-22 0l8-17z" fill="#f6f6f6" stroke="#888"/><path d="M10 18h12l5 10q-11 4-22 0z" fill="#d92a6e"/>',
  wX: '<rect x="4" y="4" width="24" height="24" rx="3" fill="#f4f4f4" stroke="#777" stroke-width="2"/><path d="M11 10l10 12M21 10L11 22" stroke="#111" stroke-width="4"/>',
  wDraw: '<path d="M3 3l9 8q14-2 17-7M12 11l3 13q-6 3-11 6" fill="none" stroke="#111" stroke-width="4"/><circle cx="20" cy="19" r="7" fill="#eee" stroke="#777" stroke-width="2"/><circle cx="20" cy="19" r="2"/>',
  wBook: '<path d="M5 5q5-5 11 0 6-5 11 0v24q-5-5-11 0-6-5-11 0z" fill="#ff9d00" stroke="#b82000" stroke-width="2"/><path d="M16 8l6 9h-4v11h-4V17h-4z"/>',

  // Grasshopper toolbar
  ghOpen: '<path d="M7 2h9l3 4h8v12H7z" fill="#ddd" stroke="#666"/><path d="M4 14l7-4h18v20H3z" fill="#6fc83c" stroke="#2f7a10" stroke-width="1.500"/>',
  ghSave: '<path d="M2 2h26l2 3v25H2z" fill="#2f62d8" stroke="#0d2a80" stroke-width="1.500"/><path d="M8 3h17v13H8z" fill="#eef2f8" stroke="#9ab"/><path d="M9 21h14v9H9z" fill="#4a4a4a"/><path d="M17 22h5v7h-5z" fill="#3b8ff0"/>',
  ghFit: '<path d="M3 11V3h9M20 3h9v8M29 21v8h-9M12 29H3v-8" fill="none" stroke="#222" stroke-width="5"/><path d="M12 12l8 8M20 12l-8 8" stroke="#333" stroke-width="3"/>',
  ghEye: '<path d="M1 16Q16 1 31 16 16 31 1 16z" fill="#fff" stroke="#333" stroke-width="2"/><circle cx="16" cy="16" r="8" fill="#4bb2e8" stroke="#145"/><circle cx="16" cy="16" r="3.500"/><circle cx="13" cy="13" r="2" fill="#fff"/>',
  ghPen: '<path d="M12 24q0-8 5-13L29 2q2 8-1 13L17 28z" fill="#e0261c"/><path d="M12 21l6 6-7 4z" fill="#e9b23a" stroke="#333"/><path d="M2 9q7 2 5 9-4 9 1 12l5-1" fill="none" stroke="#6a2a1a" stroke-width="2.500"/>',
  pvNone: '<path d="M9 16L14 3q6-3 9 3v5l-5 7z" fill="#ddd" stroke="#888" stroke-width="1.500"/><ellipse cx="19" cy="8" rx="3" ry="5" fill="#f6f6f6" stroke="#aaa"/><path d="M7 22q9-8 18 0l-2 7q-7 3-14 0z" fill="#999"/><ellipse cx="16" cy="22" rx="9" ry="7" fill="#2b2b2b"/>',
  pvWire: roll('#f0f0f0', '#ddd') + '<ellipse cx="10" cy="22" rx="4" ry="6" transform="rotate(-30 10 22)" fill="none" stroke="#555"/>',
  pvShade: roll('#c00a00', '#e23018'),
  pvTeal: '<path d="M12 3q14-2 16 6-2 12-8 20l-8 1q5-8 0-18z" fill="#13a39b" stroke="#064f55" stroke-width="1.500"/><ellipse cx="22" cy="9" rx="4" ry="5" fill="#0d7f80"/><path d="M4 3q10 4 9 13t12 15" fill="none" stroke="#333" stroke-width="2"/>',
  pvGreen: roll('#6cae16', '#9cd840') + '<path d="M5 11l17 17H10Q2 24 5 11z" fill="#e6e6e6" stroke="#777"/><path d="M4 5l22 24" stroke="#111" stroke-width="2"/>',
  pvOrange: '<circle cx="16" cy="16" r="14" fill="#f2f2f2" stroke="#777"/><path d="M16 2a14 14 0 0 0 0 28z" fill="#f09018"/>',
  pvBlue: '<path d="M10 4l12-1 7 9-1 11-9 7-11-3-5-10z" fill="url(#gSky)" stroke="#1f4fa0" stroke-width="2"/>',

  // Rhino standard toolbar
  new: '<path class="wh" d="M7 3h13l6 6v20H7z"/><path class="ln" d="M20 3v6h6"/>',
  open: '<path d="M2 8h9l2 3h12v6H8L3 27z" fill="#e9a800" stroke="#111" stroke-width="1.500"/><path d="M8 15h23l-6 14H3z" fill="#ffd95c" stroke="#111" stroke-width="1.500"/>',
  save: '<path d="M2 3h28v26H5l-3-3z" fill="#a39b53" stroke="#111" stroke-width="2"/><path d="M7 4h18v13H7z" fill="#eee" stroke="#555"/><path d="M9 21h14v8H9z" fill="#666"/><path d="M18 22h4v6h-4z" fill="#ddd"/>',
  print: '<path class="wh" d="M9 12l4-10h13l-3 10z"/><path d="M3 13h24l3 4v8l-4 4H3z" fill="#ccc" stroke="#111" stroke-width="2"/><path class="ln" d="M3 19h24M3 24h24"/>',
  props: '<path class="wh" d="M5 5h20v20l-5 5H5z"/><path d="M14 2l16 1-5 8-9-2z" fill="#fff" stroke="#111" stroke-width="1.500"/><path class="ln" d="M18 4l3 5M22 4l2 5"/>',
  cut: '<path d="M9 3l9 18M22 3l-9 18" stroke="#111" stroke-width="2.500"/><circle cx="9" cy="25" r="4" fill="none" stroke="#2c4fb0" stroke-width="2"/><circle cx="22" cy="25" r="4" fill="none" stroke="#2c4fb0" stroke-width="2"/>',
  copy: '<path class="wh" d="M5 2h11l4 5v16H5z"/><path class="wh" d="M12 9h11l4 5v16H12z"/>',
  paste: '<rect x="6" y="4" width="20" height="26" rx="2" fill="#ffd75a" stroke="#111" stroke-width="2"/><path class="wh" d="M11 7V3h3l2-2 2 2h3v4z"/>',
  undo: '<path d="M8 17q10-10 20 4" fill="none" stroke="#222" stroke-width="5"/><path d="M2 10l1 13 12-3z" fill="#222"/>',
  pan: '<path class="wh" d="M10 30L3 17q2-3 6 2L8 6q3-3 4 0l2 9V3q3-3 4 0v12l3-10q3-1 3 2l-1 10 3-5q3 0 2 3l-6 15z"/>',
  rotate: '<ellipse cx="16" cy="16" rx="14" ry="5" fill="none" stroke="#111" stroke-width="1.500"/><ellipse cx="16" cy="16" rx="5" ry="14" fill="none" stroke="#888"/><path d="M16 6l3 6h-6zM16 26l-5-5 6-4z"/>',
  zoomDyn: magnify('') + '<path class="ln" d="M19 7v6M16 10h6M16 15h6"/>',
  zoomWin: '<rect x="8" y="3" width="22" height="20" class="ln" stroke-dasharray="3 2"/>' + magnify(''),
  zoomExt: '<path d="M2 2h8L2 10zM30 2h-8l8 8zM30 30h-8l8-8zM2 30v-8l8 8z"/>' + magnify(''),
  zoomSel: magnify('') + '<circle cx="21" cy="10" r="4" fill="#ffe100" stroke="#111"/><circle cx="17" cy="15" r="4" fill="#ffe100" stroke="#111"/>',
  undoView: '<circle cx="19" cy="20" r="6" class="wh"/><path d="M15 25l-4 5" stroke="#111" stroke-width="3"/><path d="M8 10q8-9 19-2" fill="none" stroke="#222" stroke-width="4"/><path d="M3 4l2 11 9-5z"/>',
  views: '<rect x="2" y="3" width="28" height="26" fill="#bbb" stroke="#111" stroke-width="2.500"/><path class="ln" d="M16 3v26M2 16h28"/><path d="M19 5h8" stroke="#12246f" stroke-width="3"/>',
  car: '<path d="M3 18q0-4 6-4l4-5h8l3 5q6 0 6 4v4H3z" fill="#e8141c" stroke="#800"/><circle cx="9" cy="22" r="3"/><circle cx="23" cy="22" r="3"/><path d="M1 27h30" stroke="#bbb" stroke-width="2"/>',
  cplane: '<path d="M9 8l20 7-8 15-18-8zM7 13l20 7M5 17l19 8M14 10l-7 14M19 12l-7 14M24 13l-7 15" fill="none" stroke="#777"/><path d="M15 17l12 5" stroke="#e00" stroke-width="2"/><path d="M16 17l3-9" stroke="#0a0" stroke-width="2"/><rect class="wh" x="13" y="15" width="5" height="5"/>',
  center: '<circle cx="15" cy="16" r="12" fill="none" stroke="#777" stroke-width="2"/><path class="ln" d="M15 16h14"/>' + dot([15, 16]),
  select: '<path class="ln" d="M24 2h6v6M2 24v6h5"/><circle cx="11" cy="11" r="5" fill="#ffd400" stroke="#a60"/><rect x="18" y="7" width="9" height="9" fill="#ffd400" stroke="#a60"/><path d="M14 19l5 9H9z" fill="#fff" stroke="#c80" stroke-width="2"/>',
  bulb: '<path d="M12 22Q6 14 7 9q3-7 9-7t9 7q1 5-5 13z" fill="#bbb" stroke="#222" stroke-width="2"/><path d="M12 22h8v5l-4 4-4-4z" fill="#888" stroke="#222"/>',
  bulbY: '<path d="M13 20Q10 9 17 4q8-4 13 3 3 10-6 14-6 0-8 3l-5 5-6-2 2-6z" fill="#ffe100" stroke="#222" stroke-width="2"/>',
  lock: '<path d="M11 15V8q5-8 10 0v7" fill="none" stroke="#111" stroke-width="3"/><rect x="8" y="14" width="16" height="15" rx="2" fill="#bbb" stroke="#111" stroke-width="2"/><path d="M10 19h12M10 23h12" stroke="#888" stroke-width="2"/>',
  lockGrey: '<path d="M12 14V7q4-7 8 0v7" fill="none" stroke="#aaa" stroke-width="2"/><rect x="10" y="14" width="12" height="15" fill="#ddd" stroke="#aaa" stroke-width="2"/>',
  layers: layerWedge,
  wheel: wheelArcs(16, 16, 11, 6),
  sphere: '<circle cx="16" cy="16" r="13" fill="url(#gGrey)" stroke="#111" stroke-width="2"/><path fill="none" stroke="#111" stroke-width="1.500" d="M16 3q-6 12 0 26M3 18q13 6 26 0"/>',
  sphereGrid: '<path d="M4 1v30M10 1v30M16 1v30M22 1v30M28 1v30M1 4h30M1 10h30M1 16h30M1 22h30M1 28h30" stroke="#888"/><circle cx="16" cy="16" r="12" fill="url(#gGrey)" stroke="#111" stroke-width="2"/><path fill="none" stroke="#111" stroke-width="1.500" d="M16 4q-6 12 0 24M4 18q12 6 24 0"/>',
  ball: '<ellipse cx="17" cy="27" rx="13" ry="4" fill="#999"/><circle cx="16" cy="15" r="13" fill="url(#gBall)"/>',
  ballHand: '<ellipse cx="15" cy="29" rx="11" ry="3" fill="#999"/><circle cx="15" cy="18" r="11" fill="url(#gBall)"/><path d="M17 8l9-6h5v5l-8 3z" fill="#fff" stroke="#111"/>',
  spot: '<path d="M20 12L3 22l4 8 14-6z" fill="#fff" fill-opacity=".8"/><path d="M14 6l15-4-4 16z" fill="#ffb53a" stroke="#111" stroke-width="2"/>',
  gear: cogPath('#f3bd51', '#5a3a00') + '<circle cx="16" cy="16" r="8.500" fill="#f3bd51"/><rect x="13" y="9" width="6" height="12" rx="3" fill="#999" stroke="#444"/>',
  dims: '<path fill="none" stroke="#111" stroke-width="1.500" d="M2 3h14M2 19h12M4 6v10M16 19v13M28 19v13M18 28h9"/>' + dot([16, 3], [16, 18], [28, 18]) + '<path d="M4 4l3 4H1zM4 18l3-4H1z"/>',
  hopper: '<circle cx="16" cy="16" r="14" fill="#7cc63a" stroke="#111" stroke-width="2"/><path d="M3 18l7-3 4 6-2 5-6-1zM16 29l8-2-10-5z"/><path d="M12 20Q22 15 26 5" fill="none" stroke="#2c5a10" stroke-width="1.500"/>',
  help: '<circle cx="16" cy="16" r="14" fill="url(#gHelp)"/>' + txt('?', 24, '#fff'),

  // Rhino tool palette
  pArrow: '<path class="wh" d="M10 4l15 12-7 1 5 9-4 2-4-10-5 5z"/>',
  pPoint: '<circle class="wh" cx="16" cy="16" r="3"/>',
  pPoly: '<path class="ln" d="M6 26L13 7l14 15"/>' + dot([6, 26], [13, 7], [27, 22]),
  pCurve: '<path class="ln" d="M4 8h10q14 1 12 12-2 6-22 5"/>' + dot([4, 8], [4, 25], [25, 4], [28, 28]),
  pCircle: '<circle class="ln" cx="15" cy="16" r="13"/><path class="ln" d="M16 16l9-8"/>' + dot([16, 16], [25, 8]),
  pEllipse: '<ellipse class="ln" cx="16" cy="18" rx="14" ry="9"/><path class="ln" d="M16 9v9h13"/>' + dot([16, 9], [16, 18], [29, 18]),
  pArc: '<path d="M6 6v22l21-10" fill="none" stroke="#777" stroke-width="1.500"/><path class="ln" d="M6 6q18 2 21 12"/>' + dot([6, 6], [6, 28], [27, 17]),
  pRect: '<rect class="ln" x="3" y="9" width="26" height="15"/>' + dot([3, 24], [29, 9]),
  pHex: '<path class="ln" d="M9 7h14l7 9-7 9H9l-7-9z"/><path class="ln" d="M16 16h12"/>' + dot([15, 16], [27, 16]),
  pFillet: '<path d="M4 6h24v20" fill="none" stroke="#888"/><path d="M4 6q22-2 24 22" fill="none" stroke="#111" stroke-width="3"/>' + dot([4, 6], [28, 28]),
  pPatch: '<path class="bl" d="M9 6h19l-6 22-19-5z"/><path fill="none" stroke="#111" d="M17 6l-5 20M6 14l20 2"/>' + dot([9, 6], [28, 6], [22, 28], [3, 22]),
  pSweep: '<path class="wh" d="M3 11l10-7q14 1 16 12l-9 7q0-12-17-12z"/><path class="bl" d="M12 10l9-5q7 4 8 11l-9 5q0-8-8-11z"/><path class="wh" d="M20 21l9-5v7l-9 7z"/>',
  pBox: '<path class="bl" d="M3 11l15-6 11 5v13l-12 6-14-6z"/><path d="M4 11l14-5 10 4-12 5z" fill="#c6d3ff"/><path class="ln" d="M3 11l13 5 13-6M16 16v13"/>',
  pSpheres: '<circle class="bl" cx="21" cy="12" r="10"/><circle class="bl" cx="10" cy="20" r="9"/><path fill="none" stroke="#111" d="M10 11v18M1 21q9 4 18 0M21 2v20M12 12q9 4 19 0"/>',
  pPipe: '<ellipse class="wh" cx="16" cy="5" rx="8" ry="3"/><path class="bl" d="M1 12q15 6 30 0v16q-15 4-30 0z"/><ellipse cx="16" cy="23" rx="8" ry="4" fill="none" stroke="#fff" stroke-width="3"/>',
  pSurf: '<path class="bl" d="M12 4l19 2q-2 9-10 20L1 22q8-5 11-18z"/><path fill="none" stroke="#111" d="M18 5q-1 9-9 18M24 6q-1 9-9 19M9 11l18 4M5 17l18 5"/>',
  pPuzzle: '<path d="M1 11l6-3q0-6 6-3l6-2 2 5q6-1 4 4l-9 7-4-3-6 3z" fill="#ffa51f" stroke="#a04a00" stroke-width="1.500"/><path fill="#fff" stroke="#111" stroke-width="1.500" d="M13 19l7-5 4 4q6-1 4 4l3 5-7 3-4-3-5 1 1-4z"/>',
  pExplode: '<path d="M1 30V5l8 10 18-13-6 12 10-1-9 9 9 8z" fill="#ff8a1c" stroke="#d02000" stroke-width="1.500"/>',
  pTrim: '<path class="wh" d="M1 13h17v7H1zM19 19l4-2 7 8-6 4z"/><path class="nv" d="M16 3h11L16 20z"/>',
  pSplit: '<path class="wh" d="M3 15h26v8H3z"/><path class="nv" d="M16 5h11L16 23z"/>',
  pUnion: '<g fill="none" stroke="#111" stroke-width="6"><circle cx="16" cy="11" r="6"/><circle cx="10" cy="20" r="6"/><circle cx="22" cy="20" r="6"/></g><circle cx="10" cy="20" r="6" fill="#fff"/><circle cx="22" cy="20" r="6" fill="#12246f"/><circle cx="16" cy="11" r="6" fill="#6c8cf2"/>',
  pCircles: '<circle cx="17" cy="9" r="5" fill="#6c8cf2" stroke="#111" stroke-width="1.500"/><circle cx="9" cy="22" r="5" class="wh"/><circle cx="24" cy="22" r="5" fill="#12246f" stroke="#111"/>',
  pEdit: '<path d="M1 9q22-3 24 22" fill="none" stroke="#111" stroke-width="3"/>' + dot([9, 9], [24, 23]),
  pOffset: '<path d="M2 10q20-2 22 22" fill="none" stroke="#111" stroke-width="3"/><path class="ln" stroke-dasharray="2 2" d="M1 4h12q15 2 16 26"/>' + dot([12, 4], [28, 20]),
  pText: '<path d="M3 3h26v8h-4l-2-2h-4v16h4v4H9v-4h4V9H9l-2 2H3z" class="bl"/>',
  pMove: '<path class="bl" d="M20 3h10v9H20z"/><path class="wh" d="M2 20h10v9H2z"/><path class="ln" d="M12 20l8-8M15 12h5v5"/>',
  pCopy: '<path class="bl" d="M3 4h9v8H3zM20 8h9v8h-9zM15 13h9v8h-9zM20 22h9v8h-9z"/><path class="wh" d="M3 21h9v8H3z"/>',
  pRotate: '<path class="wh" d="M1 4h9v21H1z"/><path class="ln" d="M10 7q9-1 13 8M19 12l4 3 1-5"/><path class="bl" d="M12 25L26 11l5 5-12 14z"/>',
  pBoolean: '<path class="bl" d="M3 9l14-5 12 4v14l-12 7-14-5z"/><path d="M4 9l13-4 11 4-12 4z" fill="#c6d3ff"/><path class="wh" d="M13 21l10-4v8l-8 4z"/>',
  pExtrude: '<path class="bl" d="M9 22h22l-8 7H1z"/><path d="M9 22V8M16 22V8M24 22V8M5 11l4-5 4 5M12 11l4-5 4 5M20 11l4-5 4 5" fill="none" stroke="#8f8a85" stroke-width="3"/>',
  pArray: '<path class="bl" d="M3 4h6v5H3zM13 4h6v5h-6zM23 4h6v5h-6zM3 13h6v5H3zM13 13h6v5h-6zM23 13h6v5h-6zM13 23h6v5h-6zM23 23h6v5h-6z"/><path class="wh" d="M3 23h6v5H3z"/>',
  pAlign: '<path class="wh" d="M10 3h13v7H10zM12 12h8v7h-8zM11 22h10v7H11z"/><path d="M16 1v30" stroke="#e00000" stroke-width="3"/>',
  pShear: '<path class="wh" d="M2 8l9-4v20l-9 4z"/><path class="bl" d="M9 26L16 5l13-1-8 24z"/>',
  pPull: '<rect class="bl" x="12" y="2" width="5" height="28"/><path d="M2 10q10 4 10 8M17 14q8 2 10 10l4 5M2 10q6 10 9 18" fill="none" stroke="#222" stroke-width="3"/><circle cx="3" cy="8" r="3"/><circle cx="23" cy="8" r="3"/>',
  pCheck: '<path d="M2 17l4-1 4 6L30 3 11 30z"/>',
  pSolids: '<path d="M2 12l12-6 10 5v9l-12 6-10-5z" fill="#ccc" stroke="#111" stroke-width="1.500"/><path d="M2 12l10 5 12-6" fill="none" stroke="#111"/><path d="M22 8l8 16q-6 5-15 0z" fill="#ddd" stroke="#111" stroke-width="1.500"/>',
  pDrag: '<path d="M3 24L16 11l12 13-13 7z" fill="#f0cb55" stroke="#7a5a00" stroke-width="1.500"/><path d="M15 12v19l13-7z" fill="#b8912c"/><path class="ln" d="M12 7l9-5 10 1v4l-10 1z"/>',

  // Layers panel
  lNew: '<g transform="scale(.85)">' + layerWedge + '</g><path d="M23 16v13M16 23h14" stroke="#111" stroke-width="4"/>',
  lSub: '<path class="gy" d="M2 3l11 3v8l-7 3zM16 16l14 2-1 8-9 4z"/><path d="M4 18v10h10" fill="none" stroke="#aaa" stroke-width="2"/>',
  lDel: '<path class="gy" d="M3 5l3-3 10 11L26 2l3 3-10 11 10 11-3 3-10-11L6 30l-3-3 10-11z"/>',
  lDup: '<path class="gy" d="M10 11l18 3-2 12-12 4z"/><path d="M22 4Q6-1 3 12q0 10 8 16" fill="none" stroke="#aaa" stroke-width="3"/>',
  lUp: '<path class="gy" d="M16 6l13 15H3z"/>',
  lDown: '<path class="gy" d="M16 25L3 10h26z"/>',
  lLeft: '<path class="gy" d="M7 16L23 2v28z"/>',
  lFilter: '<ellipse cx="16" cy="5" rx="13" ry="4" fill="#8fa5ee" stroke="#12246f"/><path d="M3 6q13 6 26 0L19 18v12h-6V18z" fill="#5878dc" stroke="#12246f"/>',
  lTable: '<path d="M3 2h26v28H3z" fill="#fff" stroke="#777" stroke-width="2"/><path d="M3 2h26v6H3z" fill="#444"/><path d="M3 15h26M3 22h26M12 8v22M20 8v22" stroke="#777" stroke-width="1.500"/>',
  lMenu: '<path d="M3 5h26M3 16h26M3 28h26" stroke="#111" stroke-width="4"/>',
  rowBulb: '<path d="M12 22Q6 15 8 9q3-6 8-6t8 6q2 6-4 13z" fill="#ffdd1a" stroke="#b08a20" stroke-width="1.500"/><path d="M12 22h8v4l-4 5-4-5z" fill="#b87a30"/>',
  rowLock: '<path d="M22 13V6q5-6 8 1v4" fill="none" stroke="#555" stroke-width="3"/><rect x="4" y="12" width="19" height="17" fill="#ffe25a" stroke="#444" stroke-width="2"/>',
  rowCheck: '<path d="M1 17l8 8L31 4" fill="none" stroke="#222" stroke-width="3"/>',
  monitor: '<path d="M1 3h30v22H1z" fill="#333"/><path d="M4 6h24v16H4z" fill="#c8c8c8"/><path d="M10 28h12v3H10z" fill="#333"/>',
  helpBox: '<path d="M1 1h30v30H1z" fill="#fff" stroke="#111" stroke-width="2"/><path d="M2 2h28v4H2z" fill="#4560c8"/><circle cx="16" cy="19" r="11" fill="url(#gHelp)"/>' + txt('?', 18, '#fff', 16, 25),
  camera: '<path d="M1 10h8l3-5h9l3 4h7v17H1z" fill="#2c2c2c"/><circle cx="18" cy="17" r="7" fill="#667" stroke="#999"/><circle cx="18" cy="17" r="3" fill="#1c4030"/>',
  pane: '<rect x="3" y="3" width="26" height="26" fill="#fff" stroke="#555" stroke-width="5"/><path d="M3 3h8v26H3z" fill="#555"/>',

  // Taskbar
  win: '<path d="M0 0h15v15H0zM17 0h15v15H17zM0 17h15v15H0zM17 17h15v15H17z" fill="url(#gWin)"/>',
  shells: '<path d="M18 2Q4 4 3 18q1 14 12 16Q8 18 18 2z" fill="#7d94b8" stroke="#4a5d80"/><path d="M4 8l-4-2M2 15l-4-1M3 22l-4 2M6 29l-4 3" stroke="#566b90" stroke-width="3"/><circle cx="34" cy="20" r="12" fill="#b08468"/><path d="M34 20q-4-2-1-6 7-2 8 5 0 9-9 8-8-3-7-10" fill="none" stroke="#f0e0d0" stroke-width="3"/><path d="M20 18q-2 12 10 17l8-2" fill="#6e7fa0"/><path d="M45 1l17 30-9 4z" fill="#9a8f98" stroke="#6b6070"/>',
  rhinoApp: '<path d="M0 0h32v32H0z"/><path d="M3 0h9l-1 7q-1 4-4 6l-6 6V6zM6 19l6-6 3 5 6 1 8-5 3 1-3 7-5 3-4 8-8-6z" fill="#fff"/><text x="25" y="14" text-anchor="middle" font-family="Open Sans, sans-serif" font-size="12" fill="#fff">8</text>',
  tTask: '<path d="M1 10h23v22H1z" fill="#2b2b2b"/><path d="M9 1h22v22H9z" fill="#f4f4f4" fill-opacity=".85"/>',
  tTeams: '<circle cx="18" cy="5" r="5" fill="#7b83eb"/><circle cx="27" cy="8" r="3.500" fill="#5059c9"/><path d="M11 12h15v12q-7 12-15 0z" fill="#7b83eb"/><path d="M26 13h6v9q-2 5-6 4z" fill="#5059c9"/><rect x="0" y="9" width="17" height="17" rx="2" fill="#464eb8"/><path d="M4 13h9M8.500 13v10" stroke="#fff" stroke-width="2.500"/>',
  tFiles: '<path d="M0 2h11l3 4H0z" fill="#e0a000"/><path d="M0 5h32v26H0z" fill="url(#gFold)"/><path d="M6 31v-8q10-5 20 0v8z" fill="#1687d8"/><path d="M10 26h12" stroke="#0b5aa0" stroke-width="2"/>',
  tStore: '<path d="M9 6V1h14v5" fill="none" stroke="#3ccbf4" stroke-width="3"/><rect x="1" y="5" width="30" height="27" rx="4" fill="#17468c"/><path d="M9 12h6v6H9z" fill="#f25022"/><path d="M17 12h6v6h-6z" fill="#7fba00"/><path d="M9 20h6v6H9z" fill="#00a4ef"/><path d="M17 20h6v6h-6z" fill="#ffb900"/>',
  tSnip: '<rect x="1" y="0" width="22" height="24" rx="3" fill="#f2f4f6"/><path d="M5 18V5h14" fill="none" stroke="#d83b01" stroke-width="3" stroke-dasharray="3 2"/><path d="M19 6v13M6 20h22M19 19l-3 7" stroke="#8a98a8" stroke-width="3"/><circle cx="29" cy="17" r="3" fill="none" stroke="#1f9de0" stroke-width="2.500"/><circle cx="17" cy="28" r="3" fill="none" stroke="#1f9de0" stroke-width="2.500"/>',
  tPs: '<rect x="1" y="0" width="30" height="30" rx="5" fill="#001e36"/><text x="16" y="21" text-anchor="middle" font-family="Open Sans, sans-serif" font-weight="bold" font-size="16" fill="#31a8ff">Ps</text>',
  tDoc: docIcon,
  tWhats: '<path d="M2 31l2-9A14 14 0 1 1 11 29z" fill="#f4f4f4" stroke="#1f8f4f" stroke-width="3"/><path d="M11 9q-2 8 9 14l4-4-4-3-2 2-4-5 1-2-2-4z" fill="#1f8f4f"/><circle cx="28" cy="2" r="12" fill="#0078d4"/><text x="28" y="7" text-anchor="middle" font-family="Open Sans, sans-serif" font-size="15" fill="#fff">63</text>',
  tChrome: chrome,
  tChrome2: chrome + '<circle cx="28" cy="2" r="10" fill="#7b6248" stroke="#ccc"/><path d="M28-8v10M20 2h16" stroke="#d8d0c4" stroke-width="2"/>',
  tExcel: '<rect x="7" y="2" width="25" height="28" rx="2" fill="#21a366"/><path d="M7 16h25v14H7z" fill="#185c37"/><path d="M19 2h13v8H19z" fill="#33c481"/><path d="M19 16h13v7H19z" fill="#107c41"/><rect x="0" y="8" width="16" height="16" rx="2" fill="#107c41"/><path d="M5 12l6 8M11 12l-6 8" stroke="#fff" stroke-width="2"/>',
  tAcro: '<rect x="1" y="1" width="30" height="28" rx="5" fill="#b30b00"/><path d="M7 23q2-5 9-6t9 1q-4 2-8-4t0-8q2 1-1 8T7 23z" fill="none" stroke="#fff" stroke-width="2"/>',
  tPhoto: '<rect x="1" y="2" width="30" height="28" rx="3" fill="url(#gPhoto)"/><path d="M1 28l14-15 16 17H1z" fill="#38bdf5"/><path d="M10 30l12-10 9 10z" fill="#0f6cbd"/><circle cx="22" cy="8" r="3" fill="#fff"/>',
  tGreen: '<rect x="0" y="0" width="32" height="32" rx="5" fill="#00b140"/><path d="M9 7h6v9l-6 2zM17 7h6v11l-6-3zM9 20l6-3v8H9zM17 17l6 3v5h-6z" fill="#fff"/>',
  tPpt: '<circle cx="17" cy="16" r="15" fill="#d35230"/><path d="M17 1a15 15 0 0 1 15 15H17z" fill="#ff8f6b"/><path d="M17 1A15 15 0 0 0 2 16h15z" fill="#ed6c47"/><rect x="0" y="8" width="16" height="16" rx="2" fill="#c43e1c"/><text x="8" y="21" text-anchor="middle" font-family="Open Sans, sans-serif" font-weight="bold" font-size="13" fill="#fff">P</text>',
  weather: '<circle cx="13" cy="17" r="9" fill="#f7a11a"/><path d="M4 36q-4-8 5-11 3-7 10-3 5-2 7 5 7 3 2 9z" fill="#8fb9f2"/><circle cx="20" cy="9" r="9" fill="#c42b1c"/><text x="20" y="14" text-anchor="middle" font-family="Open Sans, sans-serif" font-size="13" fill="#fff">3</text>',
  trayUp: '<path d="M8 20l8-8 8 8" fill="none" stroke="#222" stroke-width="2.500"/>',
  trayCloud: '<path d="M8 24q-7-1-5-8 3-4 6-3 4-8 13-3l2 5q7 2 4 8l-4 1z" fill="none" stroke="#222" stroke-width="2"/><path d="M5 5l22 24" stroke="#222" stroke-width="2.500"/>',
  trayNet: '<path d="M22 6H4v18h20V16M10 29h10" fill="none" stroke="#222" stroke-width="2.500"/><rect x="23" y="3" width="7" height="9" rx="2" fill="none" stroke="#222" stroke-width="2"/><path d="M26 12v10" stroke="#222" stroke-width="2"/>',
  traySound: '<path d="M3 12h5l7-7v22l-7-7H3z" fill="none" stroke="#222" stroke-width="2.500"/><path d="M19 11q4 5 0 10" fill="none" stroke="#222" stroke-width="2"/><path d="M23 7q7 9 0 18" fill="none" stroke="#aaa" stroke-width="2"/>'
};

// * marks a flyout, . marks a running app
document.querySelectorAll('[data-icons]').forEach(box => {
  box.dataset.icons.split(' ').forEach(entry => {
    const name = entry.replace(/[*.]/, '');
    const btn = document.createElement('button');
    btn.className = name;
    btn.setAttribute('aria-label', name);
    if (entry.endsWith('*')) btn.classList.add('flyout');
    if (entry.endsWith('.')) btn.classList.add('running');
    btn.innerHTML = `<svg viewBox="0 0 32 32">${icons[name]}</svg>`;
    box.appendChild(btn);
  });
});
document.querySelectorAll('[data-icon]').forEach(svg => {
  svg.innerHTML = icons[svg.dataset.icon];
});

// Number sliders on the canvas
const sliders = [
  { tag: 'Number of Turns', x: 236, y: 510, w: 1246, value: 9.84, max: 50, step: 0.01 },
  { tag: 'Truncate!', x: 224, y: 644, w: 1258, value: 4.9, max: 40, step: 0.1 },
  { tag: 'Evenly Distribute Points Along Line', x: 221, y: 769, w: 1263, value: 80, max: 400, step: 1 },
  { tag: 'Scale From Vertex', x: 224, y: 891, w: 1258, value: 0.471, max: 3, step: 0.001 },
  { tag: 'Height From Vertex', x: 221, y: 1019, w: 1258, value: 105, max: 1000, step: 1 },
  { tag: 'Angle of Expansion', x: 217, y: 1271, w: 1282, value: 0.073, max: 2, step: 0.001 }
];
const canvas = document.getElementById('canvas');
const wires = document.getElementById('wires');
sliders.forEach((s, i) => {
  const node = document.createElement('div');
  node.className = 'node';
  node.style.cssText = `left:${s.x}px;top:${s.y}px;width:${s.w}px`;
  node.innerHTML = `<div class="tag">${s.tag}</div><label class="node-name" for="sl${i}">Number Slider</label>
    <div class="track"><div class="rail"><input id="sl${i}" class="${s.step === 1 ? 'whole' : ''}" type="range" min="0" max="${s.max}" step="${s.step}" value="${s.value}"><output style="left:${s.value / s.max * 100}%">${s.value}</output></div></div>`;
  canvas.insertBefore(node, wires);
});
const wirePaths = [
  'M1472 541C1640 541 1700 533 1799 513Q1860 502 1918 496',
  'M1472 674C1620 674 1660 572 1812 572',
  'M1472 674C1680 674 1690 777 1905 777',
  'M1474 800C1680 800 1690 852 1905 852',
  'M1472 921C1620 921 1780 913 1918 881',
  'M1470 1049C1630 1049 1780 1041 1918 1015',
  'M1488 1301C1650 1301 1780 1291 1918 1261'
];
wires.innerHTML = wirePaths.map(d => `<path d="${d}"/>`).join('') +
  sliders.map(s => `<path class="grip-out" d="M${s.x + s.w - 14} ${s.y + 24}a6 6 0 0 1 0 12"/>`).join('');

// Osnap and filter lists
function fillChecks(id, names, off) {
  document.getElementById(id).innerHTML = names.map(n =>
    `<label><input type="checkbox" ${off.includes(n) ? '' : 'checked'}>${n}</label>`).join('');
}
fillChecks('osnaps', ['End', 'Near', 'Point', 'Mid', 'Cen', 'Int', 'Perp', 'Tan', 'Quad', 'Knot', 'Vertex', 'Project', 'Disable'], ['Cen', 'Knot', 'Project', 'Disable']);
fillChecks('filters', ['Points', 'Curves', 'Surfaces', 'PolySurfaces', 'SubDs', 'Meshes', 'Annotations', 'Lights', 'Blocks', 'Control Points', 'Point Clouds', 'Hatches', 'Others', 'Sub-objects', 'Disable'], ['Sub-objects', 'Disable']);

// Layer rows: name, colour, indent class, has children
const layers = [
  ['Default', '#000'], ['Layer 01', '#c80000'], ['Layer 02', '#7d26cd'], ['Layer 03', '#0000ff'],
  ['Layer 04', '#007f00'], ['Layer 05', '#fff'], ['Make2D', '#000', 'd0', true],
  ['Visible', '#000', 'd1', true], ['Curves', '#000', 'd2', true], ['Layer 01', '#000', 'd3']
];
document.getElementById('layers').innerHTML = layers.map(([name, color, indent, kids], i) => {
  const icon = n => `<svg viewBox="0 0 32 32">${icons[n]}</svg>`;
  return `<tr class="${i ? '' : 'current'}"><td class="${indent || ''}">${kids ? '<i class="fold"></i>' : ''}${name}</td>
    <td>${i ? '' : icon('rowCheck')}</td><td>${i ? icon('rowBulb') : ''}</td><td>${i ? icon('rowLock') : ''}</td>
    <td><div class="swatch" style="background:${color}"></div></td><td><div class="ring"></div></td></tr>`;
}).join('');

// Front viewport: smooth curves through traced section points
function smooth(str, closed) {
  const p = str.trim().split(' ').map(s => s.split(',').map(Number));
  const n = p.length;
  const at = i => closed ? p[(i + n) % n] : p[Math.max(0, Math.min(n - 1, i))];
  let d = `M${p[0]}`;
  for (let i = 0; i < (closed ? n : n - 1); i++) {
    const [a, b, c, e] = [at(i - 1), at(i), at(i + 1), at(i + 2)];
    d += `C${b[0] + (c[0] - a[0]) / 6} ${b[1] + (c[1] - a[1]) / 6} ${c[0] - (e[0] - b[0]) / 6} ${c[1] - (e[1] - b[1]) / 6} ${c[0]} ${c[1]}`;
  }
  return `<path class="shell" d="${d}"/>`;
}
const upperOpen = ['238,1568 233,1545 230,1525 214,1503 216,1490 227,1470 223,1440 225,1400 208,1370 207,1350 214,1325 203,1300 187,1275 188,1262 201,1240 201,1210 207,1188 200,1160 184,1135 178,1115 185,1085 180,1050 161,1020 158,1000 174,970 174,945 180,920 168,885 149,852 151,835 157,805 150,775 141,752 123,722 127,705 141,685 139,660 146,630 133,598 110,555 107,540 118,510 118,485 110,460 108,435 89,407 91,390 105,372 104,350 107,332 103,318 110,308 155,309 200,285 300,268 340,240 375,213 388,190 397,150 407,110 416,82 430,71 450,69 470,80 495,91 560,93 605,100 650,125 676,129 690,123 703,128 708,145 702,175 713,197 729,217 727,235 710,252 703,268 705,290 697,325 708,370 700,395 690,410 665,460 670,515 690,540 693,560 685,580 667,605 663,640 668,660 676,685 665,710 640,768 650,790 648,825 664,850 663,870 648,895 647,920 638,942 647,975 638,1000 625,1025 617,1050 622,1085 636,1125 634,1150 622,1165 612,1205 624,1240 606,1275 600,1305 605,1350 616,1375 600,1410 593,1440 603,1470 590,1500 583,1530 586,1568'];
const upperClosed = [
  '463,101 505,106 570,105 610,115 650,140 680,157 690,180 703,225 692,260 686,300 686,370 672,410 632,453 610,456 560,450 490,445 455,435 425,427 407,428 400,445 395,490 380,540 350,575 305,598 265,602 200,602 165,580 145,550 143,505 135,455 124,408 130,365 145,340 190,320 230,298 300,289 330,282 355,288 375,303 387,298 394,260 407,205 425,150 440,115',
  '505,472 545,478 590,494 620,510 637,545 636,585 630,640 624,670 622,705 600,733 560,748 510,750 460,735 420,695 405,640 405,575 415,525 440,490 470,475',
  '305,638 350,643 380,665 393,700 395,790 385,835 355,875 310,900 265,898 215,865 203,820 190,770 184,720 195,680 225,652 265,642',
  '505,786 550,793 590,815 602,860 603,900 592,965 580,1005 545,1028 490,1030 440,1003 415,940 409,890 413,820 440,797',
  '305,936 345,943 380,962 393,990 400,1040 398,1100 380,1140 345,1165 310,1167 260,1150 232,1115 220,1060 217,1000 235,960 270,942',
  '490,1072 540,1077 570,1095 582,1130 580,1180 573,1212 560,1216 554,1230 565,1237 555,1262 525,1280 490,1284 450,1260 425,1215 412,1160 412,1110 425,1080 455,1073',
  '320,1208 360,1213 385,1230 398,1280 405,1340 397,1370 370,1400 320,1409 285,1395 258,1350 240,1290 245,1240 270,1215',
  '480,1327 525,1332 550,1350 562,1390 560,1415 553,1423 558,1440 545,1480 525,1503 490,1510 450,1492 420,1450 410,1380 413,1345 435,1328',
  '462,1172 485,1170 492,1160 500,1166 512,1155 525,1162 538,1185 535,1205 520,1208 508,1190 490,1180 462,1192 472,1182',
  '550,938 552,944 540,955 529,955 532,945', '553,1160 558,1166 553,1173 549,1166', '294,1384 310,1384 319,1392 308,1399 293,1395',
  '548,878 558,878 558,881 548,881', '570,820 577,820 575,824', '534,1011 538,1011 538,1015 534,1015', '487,1095 491,1095 491,1099 487,1099'
];
const lowerOpen = ['236,0 227,17 242,45 247,70 237,120 250,150 250,200 265,235 258,285 274,320 270,345 284,380 279,430 295,465 290,485 304,520 300,560 313,590 310,615 322,660 328,690 327,715 337,750 340,790 349,830 347,860 358,890 358,930 364,985 370,1020 376,1080 382,1130 388,1190 393,1235 405,1248 422,1250 430,1225 435,1180 445,1110 452,1060 463,1000 470,940 477,900 480,865 491,835 490,790 502,760 500,730 511,700 508,670 517,640 512,630 523,605 517,590 524,560 530,540 523,510 537,480 531,465 545,410 538,385 555,350 547,325 563,265 557,235 573,195 564,170 567,130 584,98 573,75 580,50 595,20 585,0',
  '470,110 495,108 515,100 531,92 520,102 495,110'];
const lowerClosed = [
  '335,-99 375,-93 393,-70 402,-10 390,20 345,43 300,30 270,-15 267,-60 285,-90',
  '470,-7 510,3 530,20 538,35 532,38 530,47 538,55 530,92 520,110 485,125 450,115 432,90 420,50 418,10 430,-5',
  '345,88 375,92 395,115 403,150 400,185 375,210 340,214 305,195 285,150 290,110 310,91',
  '475,169 510,172 527,205 520,250 500,280 475,286 440,268 420,225 418,185 435,171',
  '355,255 390,262 403,290 403,330 385,358 355,363 325,345 306,310 310,275 325,260',
  '460,323 495,328 511,365 505,400 480,425 450,423 425,390 418,350 425,328',
  '363,401 395,412 409,455 400,485 370,500 335,480 320,445 335,410',
  '455,462 490,470 501,505 490,545 462,555 435,540 420,510 417,475 430,464',
  '370,532 400,545 412,575 418,586 450,584 480,592 491,625 480,655 455,665 430,650 418,620 410,608 395,615 370,620 345,605 333,570 345,540',
  '375,650 400,660 412,690 420,697 450,697 475,708 480,735 470,760 450,766 430,752 418,728 410,719 380,725 355,710 347,680 357,657',
  '385,755 405,765 414,788 425,793 445,793 465,805 472,825 462,850 445,854 425,835 410,815 380,818 362,803 358,780 367,762',
  '385,844 405,853 418,877 445,879 462,895 462,920 445,933 425,920 410,902 385,901 367,880 367,857',
  '393,925 408,935 420,950 445,956 456,975 450,995 435,1001 420,985 408,975 385,973 373,950 378,930',
  '395,998 410,1010 435,1020 448,1040 440,1059 425,1055 410,1043 390,1038 380,1020 383,1002',
  '397,1062 410,1075 435,1083 440,1105 428,1113 410,1100 392,1095 386,1075',
  '405,1117 425,1127 432,1145 425,1158 405,1148 392,1130 395,1118',
  '405,1163 422,1172 426,1190 415,1193 398,1182 396,1166',
  '408,1202 418,1210 418,1222 404,1218 398,1207', '404,1232 417,1240 415,1247 402,1240', '517,42 521,42 521,46 517,46'
];
const shell = `<g transform="translate(194 125) scale(.4974 .4464)">${upperOpen.map(s => smooth(s)).join('')}${upperClosed.map(s => smooth(s, true)).join('')}</g>
  <g transform="translate(194 825) scale(.4974 .5102)">${lowerOpen.map(s => smooth(s)).join('')}${lowerClosed.map(s => smooth(s, true)).join('')}</g>`;

// Conical helix seen from the front, apex on the x axis
const ox = 397, oy = 1524;
const helix = k => {
  const h = 1247 * Math.pow(0.9256, k);
  return [ox + 0.073 * h * Math.cos(Math.PI * k), oy - h];
};
let line = '', crosses = '';
for (let k = -0.16; k < 38.8; k += 0.02) line += (line ? 'L' : 'M') + helix(k).map(v => v.toFixed(1)).join(' ');
for (let k = -0.16; k < 38.8; k += 0.096) {
  const [x, y] = helix(k).map(v => Math.round(v));
  crosses += `M${x - 5} ${y - 5}l10 10M${x + 5} ${y - 5}l-10 10`;
}
document.getElementById('scene').innerHTML = `
  <defs>
    <pattern id="minor" x="${ox}" y="${oy}" width="5.1" height="5.1" patternUnits="userSpaceOnUse"><path d="M0 0H6M0 0V6" stroke="#858d95" stroke-width="1"/></pattern>
    <pattern id="major" x="${ox}" y="${oy}" width="25.5" height="25.5" patternUnits="userSpaceOnUse"><path d="M0 .8H26M.8 0V26" stroke="#80868f" stroke-width="1.3"/></pattern>
  </defs>
  <rect y="249" width="100%" height="100%" fill="url(#minor)"/>
  <rect y="249" width="100%" height="100%" fill="url(#major)"/>
  <path d="M${ox} 0V1602M294 ${oy}H3000" stroke="#a8383a" stroke-width="2"/>
  <path d="M${ox} 0V249M${ox} ${oy}v78M294 ${oy}h102" stroke="#b8282c" stroke-width="2"/>
  <path d="M${ox} ${oy}h102" stroke="#8e0000" stroke-width="3"/>
  <path d="M638 1441v83M629 1475h18v16h-18zM629 1483h9" fill="none" stroke="#c01818" stroke-width="1.5"/>
  <path d="${crosses}" stroke="#a00000" stroke-width="7"/>
  ${shell}<g transform="translate(372.500 0)">${shell}</g>
  <path d="${line}" fill="none" stroke="#009600" stroke-width="1.5"/>
  <path d="M54 1674v45h44" fill="none" stroke="#555" stroke-width="1.5"/>
  <text x="57" y="1676" font-size="19" fill="#555">z</text><text x="103" y="1722" font-size="19" fill="#555">x</text>`;
```
